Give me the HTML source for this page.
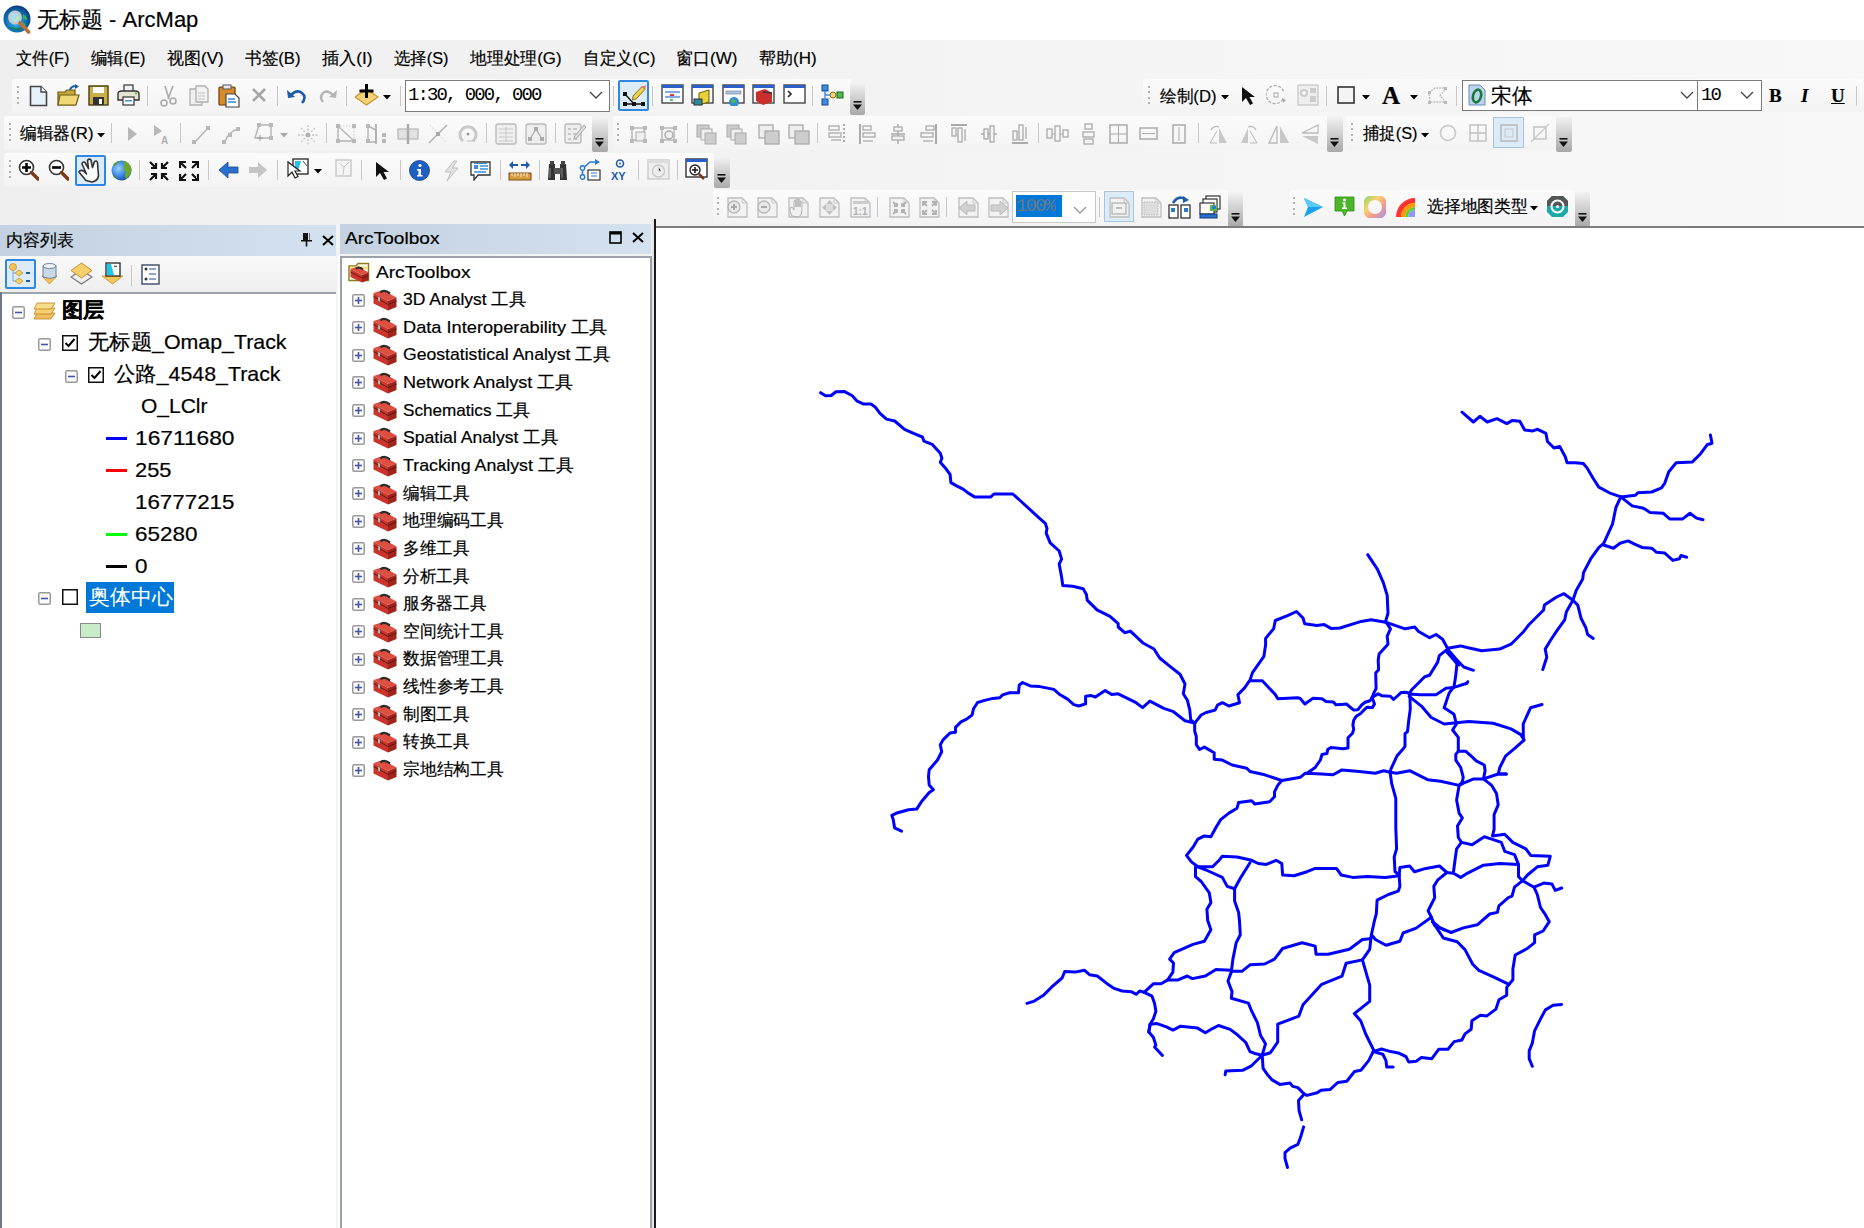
<!DOCTYPE html><html><head><meta charset="utf-8"><style>
html,body{margin:0;padding:0}
body{width:1864px;height:1228px;position:relative;overflow:hidden;background:#f0f0f0;font-family:"Liberation Sans",sans-serif;color:#000}
.a{position:absolute}
.t{white-space:nowrap;line-height:1;-webkit-text-stroke:0.2px currentColor}
</style></head><body>
<div class="a" style="left:0px;top:0px;width:1864px;height:40px;background:#fff"></div>
<div class="a" style="left:0px;top:40px;width:1864px;height:186px;background:linear-gradient(90deg,#efefef,#f2f2f2 40%,#f8f8f8)"></div>
<svg class="a" style="left:2px;top:5px" width="29" height="29" viewBox="0 0 29 29" >
<defs><radialGradient id="gl" cx="45%" cy="60%" r="60%"><stop offset="0" stop-color="#4cc0f0"/><stop offset="0.55" stop-color="#0e78c0"/><stop offset="1" stop-color="#0a3a7a"/></radialGradient></defs>
<ellipse cx="15" cy="14" rx="13.5" ry="13.5" fill="url(#gl)"/>
<path d="M21 9 Q25 11 25 15 L21 14Z M20 17 Q24 18 24 22 L19 21Z" fill="#3ab54a"/>
<path d="M8 22 Q13 26 19 23" stroke="#1a7a3a" stroke-width="2" fill="none" opacity="0.7"/>
<circle cx="13" cy="12.5" r="5.8" fill="#a8dcf2" stroke="#c8c8c8" stroke-width="2.2"/>
<path d="M12 16 Q15 14 17 11" stroke="#b8f0a0" stroke-width="1.5" fill="none"/>
<path d="M18 18 L26.5 27" stroke="#b8703a" stroke-width="3.6" stroke-linecap="round"/>
</svg>
<div class="a t" style="left:37px;top:9px;font-size:22px">无标题 - ArcMap</div>
<div class="a t" style="left:16px;top:50px;transform:scaleX(0.9602);transform-origin:0 0;font-size:17px">文件(F)</div>
<div class="a t" style="left:91px;top:50px;transform:scaleX(0.9617);transform-origin:0 0;font-size:17px">编辑(E)</div>
<div class="a t" style="left:167px;top:50px;font-size:17px">视图(V)</div>
<div class="a t" style="left:245px;top:50px;transform:scaleX(0.9793);transform-origin:0 0;font-size:17px">书签(B)</div>
<div class="a t" style="left:322px;top:50px;transform:scaleX(1.0091);transform-origin:0 0;font-size:17px">插入(I)</div>
<div class="a t" style="left:394px;top:50px;transform:scaleX(0.9617);transform-origin:0 0;font-size:17px">选择(S)</div>
<div class="a t" style="left:470px;top:50px;transform:scaleX(0.9887);transform-origin:0 0;font-size:17px">地理处理(G)</div>
<div class="a t" style="left:583px;top:50px;transform:scaleX(0.9717);transform-origin:0 0;font-size:17px">自定义(C)</div>
<div class="a t" style="left:676px;top:50px;font-size:17px">窗口(W)</div>
<div class="a t" style="left:759px;top:50px;font-size:17px">帮助(H)</div>
<div class="a" style="left:12px;top:79px;width:840px;height:33px;background:linear-gradient(#fbfbfb,#f3f3f3);border-radius:3px"></div>
<div class="a" style="left:17px;top:86.0px;width:2px;height:2px;background:#9a9a9a;border-radius:1px"></div><div class="a" style="left:17px;top:91.3px;width:2px;height:2px;background:#9a9a9a;border-radius:1px"></div><div class="a" style="left:17px;top:96.6px;width:2px;height:2px;background:#9a9a9a;border-radius:1px"></div><div class="a" style="left:17px;top:101.9px;width:2px;height:2px;background:#9a9a9a;border-radius:1px"></div>
<svg class="a" style="left:29px;top:85px" width="20" height="22" viewBox="0 0 20 22" ><path d="M1.5 1.5H12L17.5 7V20.5H1.5Z" fill="#e6f1fb" stroke="#444" stroke-width="1.6"/><path d="M12 1.5V7H17.5" fill="#fff" stroke="#444" stroke-width="1.4"/></svg>
<svg class="a" style="left:57px;top:84px" width="24" height="23" viewBox="0 0 24 23" ><path d="M1 8H8L10 6H18V21H1Z" fill="#c9a93a" stroke="#6b5a10" stroke-width="1.2"/><path d="M3 11H22L19 21H1Z" fill="#f1d877" stroke="#6b5a10" stroke-width="1.2"/><path d="M13 6 Q14 2 19 2" stroke="#1b5ca8" stroke-width="2" fill="none"/><path d="M18 0L22 2.5L18 5Z" fill="#1b5ca8"/></svg>
<svg class="a" style="left:88px;top:85px" width="21" height="21" viewBox="0 0 21 21" ><rect x="1" y="1" width="19" height="19" fill="#c9ae4a" stroke="#4a3d0a" stroke-width="1.4"/><rect x="5" y="2" width="11" height="6" fill="#fff"/><rect x="5" y="12" width="11" height="8" fill="#333"/><rect x="11" y="14" width="3" height="5" fill="#fff"/></svg>
<svg class="a" style="left:117px;top:84px" width="24" height="23" viewBox="0 0 24 23" ><rect x="7" y="1" width="9" height="8" fill="#eef5fc" stroke="#333" stroke-width="1.2"/><path d="M1 10Q1 7 5 7H18Q22 7 22 10V16H1Z" fill="#e8e4d4" stroke="#333" stroke-width="1.4"/><rect x="6" y="13" width="11" height="8" fill="#fff" stroke="#333" stroke-width="1.2"/><rect x="8" y="16" width="7" height="1.5" fill="#4a90d9"/><circle cx="19" cy="9.5" r="1" fill="#3c3"/></svg>
<div class="a" style="left:147px;top:86px;width:1px;height:20px;background:#c8c8c8"></div>
<svg class="a" style="left:157px;top:85px" width="22" height="22" viewBox="0 0 22 22" ><path d="M8 1L12 14M16 1L11 14" stroke="#aaa" stroke-width="1.6" fill="none"/><circle cx="7" cy="18" r="3" fill="none" stroke="#aaa" stroke-width="1.6"/><circle cx="16" cy="16" r="3" fill="none" stroke="#aaa" stroke-width="1.6"/></svg>
<svg class="a" style="left:189px;top:85px" width="21" height="22" viewBox="0 0 21 22" ><path d="M1 4H10L13 7V20H1Z" fill="#f0f0f0" stroke="#b0b0b0" stroke-width="1.3"/><path d="M7 1H16L19 4V17H7Z" fill="#f3f3f3" stroke="#b0b0b0" stroke-width="1.3"/><path d="M9 8H16M9 11H16M9 14H16" stroke="#c0c0c0"/></svg>
<svg class="a" style="left:218px;top:84px" width="22" height="24" viewBox="0 0 22 24" ><rect x="1" y="3" width="16" height="18" rx="1" fill="#d98a2b" stroke="#6a3a0a" stroke-width="1.2"/><rect x="5" y="1" width="8" height="4" fill="#e8e8e8" stroke="#555"/><path d="M8 10H17L21 14V23H8Z" fill="#fff" stroke="#444" stroke-width="1.2"/><path d="M10 15H17M10 18H18" stroke="#3b86d6" stroke-width="1.5"/></svg>
<svg class="a" style="left:251px;top:87px" width="16" height="16" viewBox="0 0 16 16" ><path d="M2 2L14 14M14 2L2 14" stroke="#a5a5a5" stroke-width="2.6"/></svg>
<div class="a" style="left:277px;top:86px;width:1px;height:20px;background:#c8c8c8"></div>
<svg class="a" style="left:287px;top:86px" width="20" height="19" viewBox="0 0 20 19" ><path d="M4 9 Q10 3 15 7 Q20 11 15 17" stroke="#1e5aa8" stroke-width="2.6" fill="none"/><path d="M0 4L8 11L1 12Z" fill="#1e5aa8"/></svg>
<svg class="a" style="left:319px;top:86px" width="19" height="18" viewBox="0 0 19 18" ><path d="M14 9 Q8 3 4 7 Q0 11 4 16" stroke="#b5b5b5" stroke-width="2.4" fill="none"/><path d="M18 4L10 11L17 12Z" fill="#b5b5b5"/></svg>
<div class="a" style="left:346px;top:86px;width:1px;height:20px;background:#c8c8c8"></div>
<svg class="a" style="left:355px;top:83px" width="24" height="24" viewBox="0 0 24 24" ><path d="M11.5 6L23 14L11.5 22L0 14Z" fill="#f4d27a" stroke="#c89530" stroke-width="1.2"/><path d="M11.5 1V15M4.5 8H18.5" stroke="#000" stroke-width="3"/></svg>
<svg class="a" style="left:383px;top:95px" width="8" height="5" viewBox="0 0 8 5" ><path d="M0 0H8L4 4.5Z" fill="#000"/></svg>
<div class="a" style="left:400px;top:86px;width:1px;height:20px;background:#c8c8c8"></div>
<div class="a" style="left:405px;top:80px;width:205px;height:32px;background:#fff;border:1.5px solid #7a7a7a;box-sizing:border-box"></div>
<div class="a t" style="left:408px;top:86px;transform:scaleX(0.996);transform-origin:0 0;font-family:'Liberation Mono',monospace;font-size:19px;letter-spacing:-1.9px;-webkit-text-stroke:0">1:30, 000, 000</div>
<svg class="a" style="left:589px;top:91px" width="14" height="9" viewBox="0 0 14 9" ><path d="M1 1L7 7L13 1" stroke="#444" stroke-width="1.3" fill="none"/></svg>
<div class="a" style="left:613px;top:86px;width:1px;height:20px;background:#c8c8c8"></div>
<div class="a" style="left:618px;top:80px;width:31px;height:31px;background:#dcebf8;border:2px solid #2f88e0;border-radius:2px;box-sizing:border-box"></div>
<svg class="a" style="left:622px;top:84px" width="24" height="24" viewBox="0 0 24 24" ><path d="M3 10L12 20M3 20H21" stroke="#111" stroke-width="1.3" fill="none"/><rect x="1" y="8" width="4" height="4" fill="#111"/><rect x="1" y="18" width="4" height="4" fill="#111"/><rect x="10" y="18" width="4" height="4" fill="#111"/><rect x="19" y="18" width="4" height="4" fill="#111"/><path d="M11 12L20 2.5L23 5.5L14 15L10.5 16Z" fill="#f2cf4a" stroke="#6a5a10" stroke-width="0.8"/><path d="M20 2.5L23 5.5L24 1.5Z" fill="#e66"/></svg>
<div class="a" style="left:652px;top:86px;width:1px;height:20px;background:#c8c8c8"></div>
<svg class="a" style="left:661px;top:84px" width="23" height="22" viewBox="0 0 23 22" ><rect x="1" y="1" width="21" height="18" fill="#fff" stroke="#444" stroke-width="1.4"/><rect x="1" y="1" width="21" height="3" fill="#2b5fc7"/><path d="M4 8H19M4 13H19" stroke="#5b8fdb" stroke-width="1.6"/><rect x="9" y="10" width="4" height="2" fill="#e33"/><rect x="9" y="15" width="3" height="2" fill="#5c5"/></svg>
<svg class="a" style="left:691px;top:84px" width="23" height="22" viewBox="0 0 23 22" ><rect x="1" y="1" width="21" height="18" fill="#fff" stroke="#444" stroke-width="1.4"/><rect x="1" y="1" width="21" height="3" fill="#2b5fc7"/><path d="M8 9L18 6V18L8 21Z" fill="#e8d23a" stroke="#6a5a00"/><rect x="3" y="15" width="8" height="6" fill="#2a8a9a" stroke="#333"/></svg>
<svg class="a" style="left:722px;top:84px" width="23" height="22" viewBox="0 0 23 22" ><rect x="1" y="1" width="21" height="18" fill="#fff" stroke="#444" stroke-width="1.4"/><rect x="1" y="1" width="21" height="3" fill="#2b5fc7"/><rect x="4" y="7" width="15" height="3" fill="#a9c7e8" stroke="#777" stroke-width="0.6"/><circle cx="12" cy="18" r="5" fill="#2f8fd0"/><path d="M9 16Q12 14 14 17Q12 20 10 19Z" fill="#5cb84a"/></svg>
<svg class="a" style="left:752px;top:84px" width="23" height="22" viewBox="0 0 23 22" ><rect x="1" y="1" width="21" height="18" fill="#fff" stroke="#444" stroke-width="1.4"/><rect x="1" y="1" width="21" height="3" fill="#2b5fc7"/><path d="M4 8L13 5L20 9V18L11 21L4 17Z" fill="#c9302a"/><path d="M11 8L20 9" stroke="#333" stroke-width="1.4"/></svg>
<svg class="a" style="left:783px;top:84px" width="23" height="22" viewBox="0 0 23 22" ><rect x="1" y="1" width="21" height="18" fill="#fff" stroke="#444" stroke-width="1.4"/><rect x="1" y="1" width="21" height="3" fill="#2b5fc7"/><path d="M5 7L8 10L5 13" stroke="#222" stroke-width="1.6" fill="none"/></svg>
<div class="a" style="left:812px;top:86px;width:1px;height:20px;background:#c8c8c8"></div>
<svg class="a" style="left:821px;top:84px" width="23" height="22" viewBox="0 0 23 22" ><rect x="1" y="1" width="6" height="6" fill="#3b8de0" stroke="#1a4a8a"/><rect x="1" y="15" width="6" height="6" fill="#3b8de0" stroke="#1a4a8a"/><rect x="16" y="8" width="6" height="6" fill="#55b84a" stroke="#1a6a1a"/><circle cx="12" cy="11" r="3" fill="#f3d27a" stroke="#8a6a1a"/><path d="M4 7V18M4 11H9M15 11H16" stroke="#3b8de0" stroke-width="1.4"/></svg>
<div class="a" style="left:850px;top:83px;width:15px;height:32px;background:linear-gradient(#f2f2f2,#a8a8a8);border-radius:0 0 2px 2px"></div><svg class="a" style="left:853px;top:101px" width="9" height="10" viewBox="0 0 9 10" ><rect x="0.5" y="0" width="8" height="1.6" fill="#111"/><path d="M0 3.5H9L4.5 9Z" fill="#111"/></svg>
<div class="a" style="left:1143px;top:79px;width:721px;height:33px;background:linear-gradient(#fbfbfb,#f3f3f3);border-radius:3px"></div>
<div class="a" style="left:1148px;top:86.0px;width:2px;height:2px;background:#9a9a9a;border-radius:1px"></div><div class="a" style="left:1148px;top:91.3px;width:2px;height:2px;background:#9a9a9a;border-radius:1px"></div><div class="a" style="left:1148px;top:96.6px;width:2px;height:2px;background:#9a9a9a;border-radius:1px"></div><div class="a" style="left:1148px;top:101.9px;width:2px;height:2px;background:#9a9a9a;border-radius:1px"></div>
<div class="a t" style="left:1160px;top:88px;transform:scaleX(0.9807);transform-origin:0 0;font-size:17px">绘制(D)</div>
<svg class="a" style="left:1221px;top:95px" width="8" height="5" viewBox="0 0 8 5" ><path d="M0 0H8L4 4.5Z" fill="#000"/></svg>
<svg class="a" style="left:1241px;top:86px" width="16" height="20" viewBox="0 0 16 20" ><path d="M1 1L1 16L5 12L9 19L12 17.5L8.5 11H14Z" fill="#111"/></svg>
<svg class="a" style="left:1266px;top:85px" width="22" height="22" viewBox="0 0 22 22" ><path d="M17 14A9 9 0 1 1 18 8" stroke="#b0b0b0" stroke-width="1.4" fill="none" stroke-dasharray="3 1.5"/><rect x="8" y="8" width="4" height="4" fill="none" stroke="#aaa"/><path d="M16 13L20 15L17 18Z" fill="#aaa"/></svg>
<svg class="a" style="left:1297px;top:84px" width="23" height="23" viewBox="0 0 23 23" ><rect x="1" y="1" width="20" height="20" fill="#eee" stroke="#bbb"/><circle cx="7" cy="9" r="4" fill="#ccc"/><path d="M5 9H9M7 7V11" stroke="#fff" stroke-width="1.5"/><rect x="13" y="4" width="6" height="5" fill="#ccc"/><rect x="13" y="12" width="6" height="6" fill="#ccc"/></svg>
<div class="a" style="left:1326px;top:86px;width:1px;height:20px;background:#c8c8c8"></div>
<svg class="a" style="left:1337px;top:86px" width="18" height="18" viewBox="0 0 18 18" ><rect x="1" y="1" width="16" height="16" fill="#f4f4f4" stroke="#333" stroke-width="1.6"/></svg>
<svg class="a" style="left:1362px;top:95px" width="8" height="5" viewBox="0 0 8 5" ><path d="M0 0H8L4 4.5Z" fill="#000"/></svg>
<div class="a t" style="left:1382px;top:83px;font-family:'Liberation Serif',serif;font-weight:bold;font-size:25px">A</div>
<svg class="a" style="left:1410px;top:95px" width="8" height="5" viewBox="0 0 8 5" ><path d="M0 0H8L4 4.5Z" fill="#000"/></svg>
<svg class="a" style="left:1427px;top:85px" width="22" height="22" viewBox="0 0 22 22" ><path d="M3 17L2 8L8 3H19L13 11L19 17Z" fill="none" stroke="#c0c0c0" stroke-width="1.3" stroke-dasharray="2 1"/><rect x="1" y="6" width="3" height="3" fill="#bbb"/><rect x="17" y="2" width="3" height="3" fill="#bbb"/><rect x="17" y="16" width="3" height="3" fill="#bbb"/><rect x="1" y="16" width="3" height="3" fill="#bbb"/></svg>
<div class="a" style="left:1456px;top:86px;width:1px;height:20px;background:#c8c8c8"></div>
<div class="a" style="left:1462px;top:80px;width:237px;height:31px;background:#fff;border:1.5px solid #7a7a7a;box-sizing:border-box"></div>
<svg class="a" style="left:1468px;top:84px" width="18" height="22" viewBox="0 0 18 22" ><path d="M1 1H12L17 6V21H1Z" fill="#bcd4ef" stroke="#6a8ab0"/><ellipse cx="9" cy="12" rx="4" ry="6.5" fill="none" stroke="#1a7a3a" stroke-width="2.6" transform="rotate(15 9 12)"/></svg>
<div class="a t" style="left:1491px;top:85px;transform:scaleX(0.9881);transform-origin:0 0;font-size:21px">宋体</div>
<svg class="a" style="left:1680px;top:91px" width="14" height="9" viewBox="0 0 14 9" ><path d="M1 1L7 7L13 1" stroke="#444" stroke-width="1.3" fill="none"/></svg>
<div class="a" style="left:1697px;top:80px;width:65px;height:31px;background:#fff;border:1.5px solid #7a7a7a;box-sizing:border-box"></div>
<div class="a t" style="left:1701px;top:86px;font-family:'Liberation Mono',monospace;font-size:19px;letter-spacing:-1.9px;-webkit-text-stroke:0">10</div>
<svg class="a" style="left:1740px;top:91px" width="14" height="9" viewBox="0 0 14 9" ><path d="M1 1L7 7L13 1" stroke="#444" stroke-width="1.3" fill="none"/></svg>
<div class="a t" style="left:1769px;top:86px;font-family:'Liberation Serif',serif;font-weight:bold;font-size:19px">B</div>
<div class="a t" style="left:1801px;top:86px;font-family:'Liberation Serif',serif;font-weight:bold;font-style:italic;font-size:19px">I</div>
<div class="a t" style="left:1831px;top:86px;font-family:'Liberation Serif',serif;font-weight:bold;font-size:19px;text-decoration:underline">U</div>
<div class="a" style="left:1856px;top:86px;width:1px;height:20px;background:#c8c8c8"></div>
<div class="a" style="left:4px;top:116px;width:590px;height:34px;background:linear-gradient(#fbfbfb,#f3f3f3);border-radius:3px"></div>
<div class="a" style="left:9px;top:123.0px;width:2px;height:2px;background:#9a9a9a;border-radius:1px"></div><div class="a" style="left:9px;top:128.3px;width:2px;height:2px;background:#9a9a9a;border-radius:1px"></div><div class="a" style="left:9px;top:133.6px;width:2px;height:2px;background:#9a9a9a;border-radius:1px"></div><div class="a" style="left:9px;top:138.9px;width:2px;height:2px;background:#9a9a9a;border-radius:1px"></div>
<div class="a t" style="left:20px;top:125px;transform:scaleX(0.9851);transform-origin:0 0;font-size:17px">编辑器(R)</div>
<svg class="a" style="left:97px;top:133px" width="8" height="5" viewBox="0 0 8 5" ><path d="M0 0H8L4 4.5Z" fill="#000"/></svg>
<div class="a" style="left:111px;top:123px;width:1px;height:20px;background:#c8c8c8"></div>
<svg class="a" style="left:127px;top:126px" width="11" height="16" viewBox="0 0 11 16" ><path d="M1 1L10 8L1 15Z" fill="#b8b8b8"/></svg>
<svg class="a" style="left:153px;top:124px" width="16" height="21" viewBox="0 0 16 21" ><path d="M1 1L9 7L1 12Z" fill="#b8b8b8"/><text x="8" y="20" font-size="10" font-family="Liberation Sans" fill="#b0b0b0" font-weight="bold">A</text></svg>
<div class="a" style="left:180px;top:123px;width:1px;height:20px;background:#c8c8c8"></div>
<svg class="a" style="left:192px;top:125px" width="19" height="20" viewBox="0 0 19 20" ><path d="M3 17L16 3" stroke="#b4b4b4" fill="none" stroke-width="1.4"/><rect x="0" y="15" width="4" height="4" fill="#b8b8b8"/><rect x="14" y="1" width="4" height="4" fill="#b8b8b8"/></svg>
<svg class="a" style="left:222px;top:125px" width="19" height="20" viewBox="0 0 19 20" ><path d="M3 17Q6 7 16 4" stroke="#b4b4b4" fill="none" stroke-width="1.4"/><rect x="0" y="15" width="4" height="4" fill="#b8b8b8"/><rect x="6" y="8" width="4" height="4" fill="#b8b8b8"/><rect x="14" y="2" width="4" height="4" fill="#b8b8b8"/></svg>
<svg class="a" style="left:252px;top:122px" width="22" height="22" viewBox="0 0 22 22" ><path d="M7 3H19V16H3Z" stroke="#b4b4b4" fill="none" stroke-width="1.4"/><rect x="5" y="1" width="4" height="4" fill="#b8b8b8"/><rect x="17" y="1" width="4" height="4" fill="#b8b8b8"/><rect x="17" y="14" width="4" height="4" fill="#b8b8b8"/><path d="M8 13V19M5 16H11" stroke="#999"/></svg>
<svg class="a" style="left:280px;top:133px" width="8" height="5" viewBox="0 0 8 5" ><path d="M0 0H8L4 4.5Z" fill="#aaa"/></svg>
<svg class="a" style="left:297px;top:124px" width="22" height="22" viewBox="0 0 22 22" ><path d="M11 1V21M1 11H21M4 4L8 8M18 4L14 8M4 18L8 14M18 18L14 14" stroke="#c4c4c4" stroke-width="1.3" stroke-dasharray="2 1.5"/><rect x="9" y="9" width="4" height="4" fill="#b0b0b0"/></svg>
<div class="a" style="left:326px;top:123px;width:1px;height:20px;background:#c8c8c8"></div>
<svg class="a" style="left:335px;top:123px" width="22" height="22" viewBox="0 0 22 22" ><path d="M3 3L19 18H3Z" stroke="#b4b4b4" fill="none" stroke-width="1.4"/><rect x="1" y="1" width="4" height="4" fill="#b8b8b8"/><rect x="17" y="16" width="4" height="4" fill="#b8b8b8"/><rect x="1" y="16" width="4" height="4" fill="#b8b8b8"/><rect x="17" y="1" width="4" height="4" fill="#b8b8b8"/><path d="M5 3H17M19 5V16" stroke="#c8c8c8" stroke-dasharray="1.5 1.5"/></svg>
<svg class="a" style="left:365px;top:123px" width="22" height="22" viewBox="0 0 22 22" ><path d="M3 3L11 7V19H3Z" stroke="#b4b4b4" fill="none" stroke-width="1.4"/><path d="M11 1V21" stroke="#aaa" stroke-width="1.5"/><rect x="1" y="1" width="4" height="4" fill="#b8b8b8"/><rect x="1" y="16" width="4" height="4" fill="#b8b8b8"/><rect x="17" y="10" width="4" height="4" fill="#b8b8b8"/><rect x="17" y="16" width="4" height="4" fill="#b8b8b8"/></svg>
<svg class="a" style="left:397px;top:123px" width="22" height="22" viewBox="0 0 22 22" ><rect x="1" y="6" width="20" height="10" fill="#e2e2e2" stroke="#bbb" stroke-width="1.3"/><path d="M11 1V21" stroke="#aaa" stroke-width="2.5"/></svg>
<svg class="a" style="left:428px;top:123px" width="22" height="22" viewBox="0 0 22 22" ><path d="M1 20L19 2" stroke="#b0b0b0" stroke-width="1.4"/><path d="M2 2L18 19" stroke="#c8c8c8" stroke-dasharray="1.5 2"/><rect x="8" y="9" width="4" height="4" fill="#aaa"/></svg>
<svg class="a" style="left:458px;top:123px" width="22" height="22" viewBox="0 0 22 22" ><path d="M5 18A8 8 0 1 1 15 18" stroke="#c8c8c8" stroke-width="3" fill="none"/><circle cx="10" cy="11" r="1.5" fill="#999"/><path d="M9 18H17" stroke="#bbb"/></svg>
<div class="a" style="left:486px;top:123px;width:1px;height:20px;background:#c8c8c8"></div>
<svg class="a" style="left:495px;top:123px" width="22" height="22" viewBox="0 0 22 22" ><rect x="1" y="1" width="20" height="20" rx="2" fill="#eee" stroke="#bbb" stroke-width="1.4"/><path d="M4 6H18M4 10H18M4 14H18M4 18H18M11 4V19" stroke="#c8c8c8"/></svg>
<svg class="a" style="left:525px;top:123px" width="22" height="22" viewBox="0 0 22 22" ><rect x="1" y="1" width="20" height="20" rx="2" fill="#eee" stroke="#bbb" stroke-width="1.4"/><path d="M5 16L11 6L17 16" stroke="#b0b0b0" stroke-width="1.4" fill="none"/><rect x="9" y="4" width="4" height="4" fill="#aaa"/><rect x="3" y="14" width="4" height="4" fill="#aaa"/><rect x="15" y="14" width="4" height="4" fill="#aaa"/></svg>
<div class="a" style="left:555px;top:123px;width:1px;height:20px;background:#c8c8c8"></div>
<svg class="a" style="left:564px;top:122px" width="23" height="23" viewBox="0 0 23 23" ><rect x="1" y="2" width="16" height="19" rx="2" fill="#eee" stroke="#bbb" stroke-width="1.4"/><path d="M4 7H7M4 12H7M4 17H7M9 7H13M9 12H13M9 17H13" stroke="#bbb" stroke-width="1.4"/><path d="M10 15L20 3L22 5L12 17Z" fill="#ddd" stroke="#aaa"/></svg>
<div class="a" style="left:592px;top:117px;width:16px;height:35px;background:linear-gradient(#f2f2f2,#a8a8a8);border-radius:0 0 2px 2px"></div><svg class="a" style="left:595px;top:138px" width="9" height="10" viewBox="0 0 9 10" ><rect x="0.5" y="0" width="8" height="1.6" fill="#111"/><path d="M0 3.5H9L4.5 9Z" fill="#111"/></svg>
<div class="a" style="left:613px;top:116px;width:715px;height:34px;background:linear-gradient(#fbfbfb,#f3f3f3);border-radius:3px"></div>
<div class="a" style="left:617px;top:123.0px;width:2px;height:2px;background:#9a9a9a;border-radius:1px"></div><div class="a" style="left:617px;top:128.3px;width:2px;height:2px;background:#9a9a9a;border-radius:1px"></div><div class="a" style="left:617px;top:133.6px;width:2px;height:2px;background:#9a9a9a;border-radius:1px"></div><div class="a" style="left:617px;top:138.9px;width:2px;height:2px;background:#9a9a9a;border-radius:1px"></div>
<svg class="a" style="left:629px;top:125px" width="20" height="20" viewBox="0 0 20 20" ><rect x="3" y="3" width="12" height="12" stroke="#b4b4b4" fill="none" stroke-width="1.4"/><rect x="7" y="7" width="9" height="9" fill="#eee" stroke="#aaa"/><rect x="1" y="1" width="4" height="4" fill="#b8b8b8"/><rect x="14" y="1" width="4" height="4" fill="#b8b8b8"/><rect x="1" y="14" width="4" height="4" fill="#b8b8b8"/><rect x="14" y="14" width="4" height="4" fill="#b8b8b8"/></svg>
<svg class="a" style="left:659px;top:125px" width="20" height="20" viewBox="0 0 20 20" ><rect x="3" y="3" width="12" height="12" stroke="#b4b4b4" fill="none" stroke-width="1.4"/><circle cx="10" cy="10" r="4" fill="#eee" stroke="#aaa" stroke-width="1.4"/><rect x="1" y="1" width="4" height="4" fill="#b8b8b8"/><rect x="14" y="1" width="4" height="4" fill="#b8b8b8"/><rect x="1" y="14" width="4" height="4" fill="#b8b8b8"/><rect x="14" y="14" width="4" height="4" fill="#b8b8b8"/></svg>
<div class="a" style="left:687px;top:123px;width:1px;height:20px;background:#c8c8c8"></div>
<svg class="a" style="left:696px;top:124px" width="22" height="22" viewBox="0 0 22 22" ><rect x="1" y="1" width="12" height="12" fill="#ccc" stroke="#aaa"/><rect x="5" y="5" width="11" height="11" fill="#eee" stroke="#aaa"/><rect x="9" y="9" width="11" height="11" fill="#ccc" stroke="#aaa"/></svg>
<svg class="a" style="left:726px;top:124px" width="22" height="22" viewBox="0 0 22 22" ><rect x="1" y="1" width="12" height="12" fill="#ccc" stroke="#aaa"/><rect x="5" y="5" width="11" height="11" fill="#eee" stroke="#aaa"/><rect x="9" y="9" width="11" height="11" fill="#ccc" stroke="#aaa"/></svg>
<svg class="a" style="left:758px;top:124px" width="22" height="22" viewBox="0 0 22 22" ><rect x="1" y="1" width="14" height="13" fill="#eee" stroke="#aaa" stroke-width="1.3"/><rect x="7" y="7" width="14" height="13" fill="#ccc" stroke="#aaa" stroke-width="1.3"/></svg>
<svg class="a" style="left:788px;top:124px" width="22" height="22" viewBox="0 0 22 22" ><rect x="1" y="1" width="14" height="13" fill="#eee" stroke="#aaa" stroke-width="1.3"/><rect x="7" y="7" width="14" height="13" fill="#ccc" stroke="#aaa" stroke-width="1.3"/></svg>
<div class="a" style="left:817px;top:123px;width:1px;height:20px;background:#c8c8c8"></div>
<svg class="a" style="left:828px;top:123px" width="19" height="22" viewBox="0 0 19 22" ><rect x="1" y="3" width="10" height="4" fill="none" stroke="#aaa" stroke-width="1.3"/><rect x="1" y="10" width="12" height="4" fill="none" stroke="#aaa" stroke-width="1.3"/><path d="M16 1V21" stroke="#aaa" stroke-width="2" stroke-dasharray="2 2"/><path d="M3 17H13" stroke="#aaa" stroke-width="1.3"/></svg>
<svg class="a" style="left:858px;top:123px" width="19" height="22" viewBox="0 0 19 22" ><path d="M2 1V21" stroke="#aaa" stroke-width="2"/><rect x="5" y="3" width="8" height="4" fill="none" stroke="#aaa" stroke-width="1.3"/><rect x="5" y="10" width="12" height="4" fill="none" stroke="#aaa" stroke-width="1.3"/><path d="M5 18H15" stroke="#aaa" stroke-width="1.3"/></svg>
<svg class="a" style="left:890px;top:123px" width="19" height="22" viewBox="0 0 19 22" ><path d="M8 1V21M1 11H15" stroke="#aaa" stroke-width="1.5"/><rect x="4" y="4" width="8" height="4" fill="#f3f3f3" stroke="#aaa" stroke-width="1.3"/><rect x="2" y="13" width="12" height="4" fill="#f3f3f3" stroke="#aaa" stroke-width="1.3"/></svg>
<svg class="a" style="left:920px;top:123px" width="19" height="22" viewBox="0 0 19 22" ><path d="M16 1V21" stroke="#aaa" stroke-width="2"/><rect x="6" y="3" width="8" height="4" fill="none" stroke="#aaa" stroke-width="1.3"/><rect x="1" y="10" width="12" height="4" fill="none" stroke="#aaa" stroke-width="1.3"/><path d="M3 18H13" stroke="#aaa" stroke-width="1.3"/></svg>
<svg class="a" style="left:950px;top:123px" width="19" height="22" viewBox="0 0 19 22" ><path d="M1 2H17" stroke="#aaa" stroke-width="2"/><rect x="2" y="5" width="4" height="8" fill="none" stroke="#aaa" stroke-width="1.3"/><rect x="8" y="5" width="4" height="14" fill="none" stroke="#aaa" stroke-width="1.3"/><path d="M15 6V18" stroke="#aaa" stroke-width="1.3"/></svg>
<svg class="a" style="left:980px;top:123px" width="19" height="22" viewBox="0 0 19 22" ><path d="M1 11H17" stroke="#aaa" stroke-width="1.5"/><rect x="4" y="6" width="4" height="10" fill="#f3f3f3" stroke="#aaa" stroke-width="1.3"/><rect x="10" y="3" width="4" height="16" fill="#f3f3f3" stroke="#aaa" stroke-width="1.3"/></svg>
<svg class="a" style="left:1011px;top:123px" width="19" height="22" viewBox="0 0 19 22" ><path d="M1 20H17" stroke="#aaa" stroke-width="2"/><rect x="2" y="8" width="4" height="9" fill="none" stroke="#aaa" stroke-width="1.3"/><rect x="8" y="2" width="4" height="15" fill="none" stroke="#aaa" stroke-width="1.3"/><path d="M15 4V16" stroke="#aaa" stroke-width="1.3"/></svg>
<div class="a" style="left:1038px;top:123px;width:1px;height:20px;background:#c8c8c8"></div>
<svg class="a" style="left:1046px;top:123px" width="24" height="22" viewBox="0 0 24 22" ><rect x="1" y="6" width="5" height="9" fill="none" stroke="#aaa" stroke-width="1.3"/><rect x="9" y="3" width="5" height="15" fill="none" stroke="#aaa" stroke-width="1.3"/><rect x="17" y="7" width="5" height="7" fill="none" stroke="#aaa" stroke-width="1.3"/><path d="M6 11H9M14 11H17" stroke="#aaa"/></svg>
<svg class="a" style="left:1082px;top:123px" width="14" height="22" viewBox="0 0 14 22" ><rect x="3" y="1" width="7" height="5" fill="none" stroke="#aaa" stroke-width="1.3"/><rect x="1" y="9" width="11" height="5" fill="none" stroke="#aaa" stroke-width="1.3"/><rect x="2" y="16" width="9" height="5" fill="none" stroke="#aaa" stroke-width="1.3"/></svg>
<svg class="a" style="left:1109px;top:123px" width="19" height="22" viewBox="0 0 19 22" ><rect x="1" y="2" width="17" height="18" fill="none" stroke="#aaa" stroke-width="1.5"/><path d="M9.5 2V20M1 11H18" stroke="#aaa" stroke-width="1"/></svg>
<svg class="a" style="left:1139px;top:123px" width="19" height="22" viewBox="0 0 19 22" ><rect x="1" y="5" width="17" height="11" fill="none" stroke="#aaa" stroke-width="1.5"/><path d="M3 10.5H16" stroke="#aaa"/></svg>
<svg class="a" style="left:1172px;top:123px" width="14" height="22" viewBox="0 0 14 22" ><rect x="1" y="2" width="12" height="18" fill="none" stroke="#aaa" stroke-width="1.5"/><path d="M7 4V18" stroke="#aaa"/></svg>
<div class="a" style="left:1198px;top:123px;width:1px;height:20px;background:#c8c8c8"></div>
<svg class="a" style="left:1208px;top:124px" width="22" height="22" viewBox="0 0 22 22" ><path d="M11 4L19 19H11Z" fill="#c8c8c8"/><path d="M9 7L2 19H9" fill="none" stroke="#bbb"/><path d="M3 6Q6 1 11 3" stroke="#bbb" fill="none" stroke-width="1.3"/></svg>
<svg class="a" style="left:1239px;top:124px" width="22" height="22" viewBox="0 0 22 22" ><path d="M9 4L2 19H9Z" fill="#c8c8c8"/><path d="M11 7L18 19H11" fill="none" stroke="#bbb"/><path d="M17 6Q14 1 9 3" stroke="#bbb" fill="none" stroke-width="1.3"/></svg>
<svg class="a" style="left:1268px;top:124px" width="22" height="22" viewBox="0 0 22 22" ><path d="M9 2L1 19H9Z" fill="none" stroke="#bbb" stroke-width="1.3"/><path d="M12 2L21 19H12Z" fill="#c8c8c8"/></svg>
<svg class="a" style="left:1301px;top:124px" width="22" height="22" viewBox="0 0 22 22" ><path d="M17 1L1 9H17Z" fill="none" stroke="#bbb" stroke-width="1.3"/><path d="M17 12L1 12L17 20Z" fill="#c8c8c8"/></svg>
<div class="a" style="left:1327px;top:117px;width:16px;height:35px;background:linear-gradient(#f2f2f2,#a8a8a8);border-radius:0 0 2px 2px"></div><svg class="a" style="left:1330px;top:138px" width="9" height="10" viewBox="0 0 9 10" ><rect x="0.5" y="0" width="8" height="1.6" fill="#111"/><path d="M0 3.5H9L4.5 9Z" fill="#111"/></svg>
<div class="a" style="left:1347px;top:116px;width:210px;height:34px;background:linear-gradient(#fbfbfb,#f3f3f3);border-radius:3px"></div>
<div class="a" style="left:1351px;top:123.0px;width:2px;height:2px;background:#9a9a9a;border-radius:1px"></div><div class="a" style="left:1351px;top:128.3px;width:2px;height:2px;background:#9a9a9a;border-radius:1px"></div><div class="a" style="left:1351px;top:133.6px;width:2px;height:2px;background:#9a9a9a;border-radius:1px"></div><div class="a" style="left:1351px;top:138.9px;width:2px;height:2px;background:#9a9a9a;border-radius:1px"></div>
<div class="a t" style="left:1363px;top:125px;transform:scaleX(0.9617);transform-origin:0 0;font-size:17px">捕捉(S)</div>
<svg class="a" style="left:1421px;top:133px" width="8" height="5" viewBox="0 0 8 5" ><path d="M0 0H8L4 4.5Z" fill="#000"/></svg>
<svg class="a" style="left:1439px;top:124px" width="18" height="18" viewBox="0 0 18 18" ><circle cx="9" cy="9" r="7.5" fill="none" stroke="#c8c8c8" stroke-width="1.6"/></svg>
<svg class="a" style="left:1469px;top:124px" width="18" height="18" viewBox="0 0 18 18" ><rect x="1" y="1" width="16" height="16" fill="none" stroke="#c0c0c0" stroke-width="1.4"/><path d="M9 1V17M1 9H17" stroke="#c0c0c0" stroke-width="1.4"/></svg>
<div class="a" style="left:1493px;top:117px;width:31px;height:31px;background:#dcebf8;border:1.5px solid #a9c4dc;box-sizing:border-box"></div>
<svg class="a" style="left:1500px;top:124px" width="18" height="18" viewBox="0 0 18 18" ><rect x="1" y="1" width="16" height="16" fill="none" stroke="#b8b8b8" stroke-width="1.5"/><rect x="5" y="5" width="8" height="8" fill="none" stroke="#c8c8c8"/></svg>
<svg class="a" style="left:1530px;top:123px" width="20" height="20" viewBox="0 0 20 20" ><rect x="4" y="4" width="12" height="12" fill="none" stroke="#c0c0c0" stroke-width="1.4"/><path d="M1 19L19 1" stroke="#c8c8c8" stroke-width="1.3"/></svg>
<div class="a" style="left:1556px;top:117px;width:16px;height:35px;background:linear-gradient(#f2f2f2,#a8a8a8);border-radius:0 0 2px 2px"></div><svg class="a" style="left:1559px;top:138px" width="9" height="10" viewBox="0 0 9 10" ><rect x="0.5" y="0" width="8" height="1.6" fill="#111"/><path d="M0 3.5H9L4.5 9Z" fill="#111"/></svg>
<div class="a" style="left:4px;top:153px;width:710px;height:34px;background:linear-gradient(#fbfbfb,#f3f3f3);border-radius:3px"></div>
<div class="a" style="left:9px;top:160.0px;width:2px;height:2px;background:#9a9a9a;border-radius:1px"></div><div class="a" style="left:9px;top:165.3px;width:2px;height:2px;background:#9a9a9a;border-radius:1px"></div><div class="a" style="left:9px;top:170.6px;width:2px;height:2px;background:#9a9a9a;border-radius:1px"></div><div class="a" style="left:9px;top:175.9px;width:2px;height:2px;background:#9a9a9a;border-radius:1px"></div>
<svg class="a" style="left:18px;top:159px" width="21" height="22" viewBox="0 0 21 22" ><circle cx="8.5" cy="8.5" r="7" fill="#fff" stroke="#333" stroke-width="1.6"/><path d="M8.5 4V13M4 8.5H13" stroke="#000" stroke-width="2.6"/><path d="M13.5 13.5L20 20" stroke="#7a3a1a" stroke-width="3.4" stroke-linecap="round"/></svg>
<svg class="a" style="left:48px;top:159px" width="21" height="22" viewBox="0 0 21 22" ><circle cx="8.5" cy="8.5" r="7" fill="#fff" stroke="#333" stroke-width="1.6"/><path d="M4 8.5H13" stroke="#000" stroke-width="2.6"/><path d="M13.5 13.5L20 20" stroke="#7a3a1a" stroke-width="3.4" stroke-linecap="round"/></svg>
<div class="a" style="left:75px;top:155px;width:31px;height:31px;background:#dcebf8;border:2px solid #2f88e0;border-radius:2px;box-sizing:border-box"></div>
<svg class="a" style="left:76px;top:156px" width="26" height="28" viewBox="0 0 26 28" ><path d="M3 16 Q5 13 8 15.5 L10.5 18 L6 8 Q6.5 5 9 6.5 L12.5 12.5 L11.5 4.5 Q13 2 15 4 L16.5 11.5 L18.5 5.5 Q20.5 4 21.5 6.5 L22.5 20 Q21.5 25 16 26 L10 24.5 Z" fill="#fdfdfd" stroke="#333" stroke-width="1.6" stroke-linejoin="round"/></svg>
<svg class="a" style="left:111px;top:160px" width="21" height="21" viewBox="0 0 21 21" ><defs><radialGradient id="gb" cx="35%" cy="40%" r="70%"><stop offset="0" stop-color="#9ad0ff"/><stop offset="0.6" stop-color="#2f7fe0"/><stop offset="1" stop-color="#1a3f8a"/></radialGradient></defs><circle cx="10.5" cy="10.5" r="10" fill="url(#gb)"/><path d="M12 1 Q19 2 20.5 9 Q20 16 15 19 Q13 15 15 12 Q12 10 12.5 7 Q14 5 12 1Z" fill="#6aa82a"/><path d="M2 5 Q5 1 9 1 Q6 3 4 6Z" fill="#5a9a2a"/><path d="M2 14 Q4 17 7 19 Q4 19 2 16Z" fill="#4a8a20"/></svg>
<div class="a" style="left:139px;top:160px;width:1px;height:20px;background:#c8c8c8"></div>
<svg class="a" style="left:149px;top:161px" width="20" height="20" viewBox="0 0 20 20" ><path d="M1 1L7 7M7 2V7H2M19 1L13 7M13 2V7H18M1 19L7 13M2 13H7V18M19 19L13 13M18 13H13V18" stroke="#111" stroke-width="2.2" fill="none"/></svg>
<svg class="a" style="left:179px;top:161px" width="20" height="20" viewBox="0 0 20 20" ><path d="M7 1H1V7M1 1L7 7M13 1H19V7M19 1L13 7M1 13V19H7M1 19L7 13M19 13V19H13M19 19L13 13" stroke="#111" stroke-width="2.2" fill="none"/></svg>
<div class="a" style="left:208px;top:160px;width:1px;height:20px;background:#c8c8c8"></div>
<svg class="a" style="left:219px;top:161px" width="20" height="19" viewBox="0 0 20 19" ><path d="M0 9L9 1V6H19V12H9V17Z" fill="#2a6fd0" stroke="#184a90" stroke-width="0.8"/></svg>
<svg class="a" style="left:248px;top:161px" width="20" height="19" viewBox="0 0 20 19" ><path d="M19 9L10 1V6H1V12H10V17Z" fill="#c5c5c5"/></svg>
<div class="a" style="left:277px;top:160px;width:1px;height:20px;background:#c8c8c8"></div>
<svg class="a" style="left:287px;top:158px" width="22" height="22" viewBox="0 0 22 22" ><rect x="6" y="1" width="15" height="15" fill="#fff" stroke="#333" stroke-width="1.4"/><path d="M8 3L14 3L12 10L8 14Z" fill="#22c5e8"/><path d="M16 3L20 8" stroke="#555"/><path d="M1 4L1 18L5 14L8 20L11 18.5L8 13H13Z" fill="#fff" stroke="#222" stroke-width="1.2"/></svg>
<svg class="a" style="left:314px;top:169px" width="8" height="5" viewBox="0 0 8 5" ><path d="M0 0H8L4 4.5Z" fill="#000"/></svg>
<svg class="a" style="left:335px;top:159px" width="17" height="19" viewBox="0 0 17 19" ><rect x="1" y="1" width="15" height="16" fill="#f4f4f4" stroke="#c4c4c4" stroke-width="1.3"/><path d="M4 4L9 8L8 16M9 8L14 3" stroke="#c8c8c8" fill="none"/></svg>
<div class="a" style="left:361px;top:160px;width:1px;height:20px;background:#c8c8c8"></div>
<svg class="a" style="left:375px;top:161px" width="16" height="20" viewBox="0 0 16 20" ><path d="M1 1L1 16L5 12L9 19L12 17.5L8.5 11H14Z" fill="#111"/></svg>
<div class="a" style="left:400px;top:160px;width:1px;height:20px;background:#c8c8c8"></div>
<svg class="a" style="left:409px;top:160px" width="21" height="21" viewBox="0 0 21 21" ><circle cx="10.5" cy="10.5" r="10" fill="#1e5fc2"/><circle cx="10.5" cy="10.5" r="10" fill="none" stroke="#0e3a8a" stroke-width="0.8"/><circle cx="11" cy="5.5" r="1.6" fill="#fff"/><path d="M8 9H12V15H13.5V16.5H8V15H9.5V10.5H8Z" fill="#fff"/></svg>
<svg class="a" style="left:442px;top:160px" width="19" height="22" viewBox="0 0 19 22" ><path d="M12 1L3 12H9L5 21L16 8H10L15 1Z" fill="#e2e2e2" stroke="#c0c0c0"/></svg>
<svg class="a" style="left:470px;top:160px" width="21" height="21" viewBox="0 0 21 21" ><path d="M1 2H20V15H8L4 20V15H1Z" fill="#fff" stroke="#333" stroke-width="1.3"/><rect x="4" y="5" width="4" height="4" fill="#3b8de0"/><path d="M10 6H18M10 9H18M4 12H16" stroke="#3b8de0" stroke-width="1.3"/><path d="M4 3.5H17" stroke="#3b8de0"/></svg>
<div class="a" style="left:500px;top:160px;width:1px;height:20px;background:#c8c8c8"></div>
<svg class="a" style="left:508px;top:160px" width="24" height="21" viewBox="0 0 24 21" ><path d="M1 5L5 1V4H10V6H5V9ZM22 5L18 1V4H13V6H18V9Z" fill="#1e5aa8"/><rect x="1" y="13" width="22" height="7" fill="#d99b40" stroke="#7a4a10"/><path d="M4 13V16M7 13V17M10 13V16M13 13V17M16 13V16M19 13V17" stroke="#fff" stroke-width="0.8"/></svg>
<div class="a" style="left:539px;top:160px;width:1px;height:20px;background:#c8c8c8"></div>
<svg class="a" style="left:547px;top:160px" width="21" height="21" viewBox="0 0 21 21" ><path d="M2 4H8V20H1Z M13 4H19L20 20H13Z" fill="#333"/><rect x="7" y="8" width="7" height="6" fill="#555"/><rect x="3" y="1" width="4" height="4" fill="#444"/><rect x="14" y="1" width="4" height="4" fill="#444"/><path d="M3 8V18M15 8V18" stroke="#888"/></svg>
<svg class="a" style="left:579px;top:159px" width="22" height="22" viewBox="0 0 22 22" ><circle cx="3.5" cy="18" r="2.2" fill="none" stroke="#2a7ad0" stroke-width="1.4"/><circle cx="3.5" cy="9" r="2.2" fill="none" stroke="#2a7ad0" stroke-width="1.4"/><path d="M3.5 11V16M5.5 8L11 3H16" stroke="#2a7ad0" stroke-width="1.5" fill="none"/><path d="M16 0L21 3L16 6Z" fill="#2a7ad0"/><rect x="9" y="11" width="12" height="10" fill="#fff" stroke="#333" stroke-width="1.2"/><path d="M12 14H18M12 17H18" stroke="#2a7ad0"/></svg>
<svg class="a" style="left:611px;top:159px" width="19" height="22" viewBox="0 0 19 22" ><circle cx="9" cy="4.5" r="3.5" fill="none" stroke="#1e5aa8" stroke-width="1.6"/><circle cx="9" cy="4.5" r="1" fill="#1e5aa8"/><text x="0" y="21" font-family="Liberation Sans" font-weight="bold" font-size="11" fill="#1e5aa8">XY</text></svg>
<div class="a" style="left:638px;top:160px;width:1px;height:20px;background:#c8c8c8"></div>
<svg class="a" style="left:647px;top:159px" width="23" height="21" viewBox="0 0 23 21" ><rect x="1" y="1" width="21" height="19" fill="#eee" stroke="#c8c8c8" stroke-width="1.3"/><rect x="1" y="1" width="21" height="3" fill="#ddd"/><circle cx="11.5" cy="12" r="6" fill="none" stroke="#c8c8c8" stroke-width="1.4"/><path d="M11.5 8V12H14" stroke="#c8c8c8"/></svg>
<div class="a" style="left:677px;top:160px;width:1px;height:20px;background:#c8c8c8"></div>
<svg class="a" style="left:685px;top:158px" width="23" height="23" viewBox="0 0 23 23" ><rect x="1" y="1" width="21" height="18" fill="#fff" stroke="#333" stroke-width="1.4"/><rect x="1" y="1" width="21" height="3" fill="#2b5fc7"/><circle cx="10" cy="12" r="5" fill="#fff" stroke="#222" stroke-width="1.4"/><path d="M10 9V15M7 12H13" stroke="#111" stroke-width="1.5"/><path d="M14 16L19 21" stroke="#7a3a1a" stroke-width="2.5"/></svg>
<div class="a" style="left:714px;top:157px;width:16px;height:31px;background:linear-gradient(#f2f2f2,#a8a8a8);border-radius:0 0 2px 2px"></div><svg class="a" style="left:717px;top:174px" width="9" height="10" viewBox="0 0 9 10" ><rect x="0.5" y="0" width="8" height="1.6" fill="#111"/><path d="M0 3.5H9L4.5 9Z" fill="#111"/></svg>
<div class="a" style="left:713px;top:190px;width:515px;height:34px;background:linear-gradient(#fbfbfb,#f3f3f3);border-radius:3px"></div>
<div class="a" style="left:717px;top:197.0px;width:2px;height:2px;background:#9a9a9a;border-radius:1px"></div><div class="a" style="left:717px;top:202.3px;width:2px;height:2px;background:#9a9a9a;border-radius:1px"></div><div class="a" style="left:717px;top:207.6px;width:2px;height:2px;background:#9a9a9a;border-radius:1px"></div><div class="a" style="left:717px;top:212.9px;width:2px;height:2px;background:#9a9a9a;border-radius:1px"></div>
<svg class="a" style="left:726px;top:196px" width="23" height="23" viewBox="0 0 23 23" ><path d="M2 2H16L21 7V21H2Z" fill="#f2f2f2" stroke="#bdbdbd" stroke-width="1.3"/><path d="M16 2V7H21" fill="none" stroke="#c8c8c8"/><circle cx="8" cy="11" r="6" fill="#e8e8e8" stroke="#b8b8b8" stroke-width="1.4"/><path d="M8 8V14M5 11H11" stroke="#aaa" stroke-width="2"/></svg>
<svg class="a" style="left:756px;top:196px" width="23" height="23" viewBox="0 0 23 23" ><path d="M2 2H16L21 7V21H2Z" fill="#f2f2f2" stroke="#bdbdbd" stroke-width="1.3"/><path d="M16 2V7H21" fill="none" stroke="#c8c8c8"/><circle cx="8" cy="11" r="6" fill="#e8e8e8" stroke="#b8b8b8" stroke-width="1.4"/><path d="M5 11H11" stroke="#aaa" stroke-width="2"/></svg>
<svg class="a" style="left:787px;top:196px" width="23" height="23" viewBox="0 0 23 23" ><path d="M2 2H16L21 7V21H2Z" fill="#f2f2f2" stroke="#bdbdbd" stroke-width="1.3"/><path d="M16 2V7H21" fill="none" stroke="#c8c8c8"/><path d="M5 20Q2 15 3 12L5 11L7 14V5Q8 4 9 5V11V3Q10 2 11 3V11V4Q12 3 13 4V11V6Q14 5 15 6V14Q15 19 12 21Z" fill="#f0f0f0" stroke="#b0b0b0"/></svg>
<svg class="a" style="left:818px;top:196px" width="23" height="23" viewBox="0 0 23 23" ><path d="M2 2H16L21 7V21H2Z" fill="#f2f2f2" stroke="#bdbdbd" stroke-width="1.3"/><path d="M16 2V7H21" fill="none" stroke="#c8c8c8"/><path d="M11.5 4L15 8H8Z M11.5 19L15 15H8Z M4 11.5L8 8V15Z M19 11.5L15 8V15Z" fill="#c0c0c0"/><rect x="8" y="8" width="7" height="7" fill="#ddd"/></svg>
<svg class="a" style="left:849px;top:196px" width="23" height="23" viewBox="0 0 23 23" ><path d="M2 2H16L21 7V21H2Z" fill="#f2f2f2" stroke="#bdbdbd" stroke-width="1.3"/><path d="M16 2V7H21" fill="none" stroke="#c8c8c8"/><rect x="4" y="5" width="15" height="3" fill="#ccc"/><text x="4" y="19" font-family="Liberation Sans" font-weight="bold" font-size="10" fill="#b0b0b0">1:1</text></svg>
<div class="a" style="left:877px;top:197px;width:1px;height:20px;background:#c8c8c8"></div>
<svg class="a" style="left:888px;top:196px" width="23" height="23" viewBox="0 0 23 23" ><path d="M2 2H16L21 7V21H2Z" fill="#f2f2f2" stroke="#bdbdbd" stroke-width="1.3"/><path d="M16 2V7H21" fill="none" stroke="#c8c8c8"/><path d="M5 6L9 10M9 7V10H6M18 6L14 10M14 7V10H17M5 18L9 14M6 14H9V17M18 18L14 14M17 14H14V17" stroke="#b0b0b0" stroke-width="1.8" fill="none"/></svg>
<svg class="a" style="left:918px;top:196px" width="23" height="23" viewBox="0 0 23 23" ><path d="M2 2H16L21 7V21H2Z" fill="#f2f2f2" stroke="#bdbdbd" stroke-width="1.3"/><path d="M16 2V7H21" fill="none" stroke="#c8c8c8"/><path d="M9 6H5V10M5 6L9 10M14 6H18V10M18 6L14 10M5 14V18H9M5 18L9 14M18 14V18H14M18 18L14 14" stroke="#b0b0b0" stroke-width="1.8" fill="none"/></svg>
<div class="a" style="left:946px;top:197px;width:1px;height:20px;background:#c8c8c8"></div>
<svg class="a" style="left:957px;top:196px" width="23" height="23" viewBox="0 0 23 23" ><path d="M2 2H16L21 7V21H2Z" fill="#f2f2f2" stroke="#bdbdbd" stroke-width="1.3"/><path d="M16 2V7H21" fill="none" stroke="#c8c8c8"/><path d="M2 12L10 5V9H18V15H10V19Z" fill="#d0d0d0" stroke="#bbb"/></svg>
<svg class="a" style="left:987px;top:196px" width="23" height="23" viewBox="0 0 23 23" ><path d="M2 2H16L21 7V21H2Z" fill="#f2f2f2" stroke="#bdbdbd" stroke-width="1.3"/><path d="M16 2V7H21" fill="none" stroke="#c8c8c8"/><path d="M21 12L13 5V9H4V15H13V19Z" fill="#d0d0d0" stroke="#bbb"/></svg>
<div class="a" style="left:1012px;top:191px;width:84px;height:32px;background:#fff;border:1px solid #c8c8c8;box-sizing:border-box"></div>
<div class="a" style="left:1016px;top:195px;width:46px;height:22px;background:#0078d7"></div>
<div class="a t" style="left:1016px;top:197px;font-family:'Liberation Mono',monospace;font-size:19px;letter-spacing:-1.9px;color:#6d7886;-webkit-text-stroke:0">100%</div>
<svg class="a" style="left:1073px;top:206px" width="14" height="9" viewBox="0 0 14 9" ><path d="M1 1L7 7L13 1" stroke="#999" stroke-width="1.3" fill="none"/></svg>
<div class="a" style="left:1099px;top:197px;width:1px;height:20px;background:#c8c8c8"></div>
<div class="a" style="left:1104px;top:191px;width:30px;height:31px;background:#dcebf8;border:1.5px solid #a9c4dc;box-sizing:border-box"></div>
<svg class="a" style="left:1108px;top:196px" width="23" height="23" viewBox="0 0 23 23" ><path d="M2 2H16L21 7V21H2Z" fill="#f2f2f2" stroke="#bdbdbd" stroke-width="1.3"/><path d="M16 2V7H21" fill="none" stroke="#c8c8c8"/><rect x="4" y="7" width="14" height="11" fill="none" stroke="#b8b8b8" stroke-width="1.4"/><path d="M8 12H14" stroke="#aaa" stroke-width="1.5"/></svg>
<svg class="a" style="left:1140px;top:196px" width="23" height="23" viewBox="0 0 23 23" ><path d="M2 2H16L21 7V21H2Z" fill="#f2f2f2" stroke="#bdbdbd" stroke-width="1.3"/><path d="M16 2V7H21" fill="none" stroke="#c8c8c8"/><rect x="4" y="6" width="14" height="13" fill="#ddd" stroke="#bbb" stroke-dasharray="1.5 1"/></svg>
<svg class="a" style="left:1168px;top:195px" width="23" height="24" viewBox="0 0 23 24" ><path d="M5 8Q10 0 17 4" stroke="#1e5aa8" stroke-width="2.6" fill="none"/><path d="M15 1L21 5L15 8Z" fill="#1e5aa8"/><rect x="1" y="10" width="9" height="13" fill="#fff" stroke="#333" stroke-width="1.3"/><rect x="13" y="10" width="9" height="13" fill="#fff" stroke="#333" stroke-width="1.3"/><rect x="3" y="13" width="4" height="4" fill="#2a7ad0"/><rect x="16" y="13" width="4" height="4" fill="#2a7ad0"/></svg>
<svg class="a" style="left:1199px;top:195px" width="23" height="24" viewBox="0 0 23 24" ><rect x="7" y="1" width="14" height="13" fill="#fff" stroke="#333" stroke-width="1.2"/><rect x="4" y="4" width="14" height="13" fill="#fff" stroke="#333" stroke-width="1.2"/><rect x="1" y="8" width="14" height="11" fill="#fff" stroke="#333" stroke-width="1.2"/><rect x="11" y="10" width="7" height="6" fill="#5cb84a"/><rect x="13" y="11" width="4" height="3" fill="#2a7ad0"/><rect x="1" y="19" width="17" height="4" fill="#2a6fd0" stroke="#143a7a"/></svg>
<div class="a" style="left:1228px;top:192px;width:15px;height:35px;background:linear-gradient(#f2f2f2,#a8a8a8);border-radius:0 0 2px 2px"></div><svg class="a" style="left:1231px;top:213px" width="9" height="10" viewBox="0 0 9 10" ><rect x="0.5" y="0" width="8" height="1.6" fill="#111"/><path d="M0 3.5H9L4.5 9Z" fill="#111"/></svg>
<div class="a" style="left:1289px;top:190px;width:286px;height:34px;background:linear-gradient(#fbfbfb,#f3f3f3);border-radius:3px"></div>
<div class="a" style="left:1293px;top:197.0px;width:2px;height:2px;background:#9a9a9a;border-radius:1px"></div><div class="a" style="left:1293px;top:202.3px;width:2px;height:2px;background:#9a9a9a;border-radius:1px"></div><div class="a" style="left:1293px;top:207.6px;width:2px;height:2px;background:#9a9a9a;border-radius:1px"></div><div class="a" style="left:1293px;top:212.9px;width:2px;height:2px;background:#9a9a9a;border-radius:1px"></div>
<svg class="a" style="left:1303px;top:197px" width="20" height="21" viewBox="0 0 20 21" ><path d="M1 1L20 10L1 20L5 10Z" fill="#1aa3ec"/><path d="M1 1L20 10L5 10Z" fill="#5cc8f8"/></svg>
<svg class="a" style="left:1334px;top:196px" width="21" height="21" viewBox="0 0 21 21" ><path d="M1 1H20V15H13L10.5 20L8 15H1Z" fill="#4db52a" stroke="#2a8a10" stroke-width="0.8"/><circle cx="10.5" cy="4" r="1.5" fill="#fff"/><path d="M8.5 6.5H11.5V11.5H13V13H8V11.5H9.5V8H8.5Z" fill="#fff"/></svg>
<svg class="a" style="left:1364px;top:196px" width="22" height="22" viewBox="0 0 22 22" ><circle cx="11" cy="11" r="10" fill="none" stroke="url(#rb)" stroke-width="6"/><defs><linearGradient id="rb" x1="0" y1="0" x2="1" y2="1"><stop offset="0" stop-color="#9ad86a"/><stop offset="0.35" stop-color="#f8d070"/><stop offset="0.65" stop-color="#f59a8a"/><stop offset="1" stop-color="#a898e8"/></linearGradient></defs></svg>
<svg class="a" style="left:1395px;top:196px" width="21" height="22" viewBox="0 0 21 22" ><path d="M1 21A19 19 0 0 1 20 2V7A14 14 0 0 0 6 21Z" fill="#f33"/><path d="M6 21A14 14 0 0 1 20 7V11A10 10 0 0 0 10 21Z" fill="#f90"/><path d="M10 21A10 10 0 0 1 20 11V14A7 7 0 0 0 13 21Z" fill="#6c3"/><path d="M13 21A7 7 0 0 1 20 14V21Z" fill="#89f"/></svg>
<div class="a t" style="left:1427px;top:198px;transform:scaleX(0.9853);transform-origin:0 0;font-size:17px">选择地图类型</div>
<svg class="a" style="left:1530px;top:206px" width="8" height="5" viewBox="0 0 8 5" ><path d="M0 0H8L4 4.5Z" fill="#000"/></svg>
<svg class="a" style="left:1546px;top:195px" width="23" height="23" viewBox="0 0 23 23" ><path d="M6 1H17L22 6V17L17 22H6L1 17V6Z" fill="#1aa8a8"/><path d="M6 1H17L22 6V11H1V6Z" fill="#555"/><circle cx="11.5" cy="11.5" r="6" fill="none" stroke="#fff" stroke-width="2"/><circle cx="11.5" cy="11.5" r="1.6" fill="#fff"/></svg>
<div class="a" style="left:1575px;top:192px;width:15px;height:35px;background:linear-gradient(#f2f2f2,#a8a8a8);border-radius:0 0 2px 2px"></div><svg class="a" style="left:1578px;top:213px" width="9" height="10" viewBox="0 0 9 10" ><rect x="0.5" y="0" width="8" height="1.6" fill="#111"/><path d="M0 3.5H9L4.5 9Z" fill="#111"/></svg>
<div class="a" style="left:0px;top:225px;width:336px;height:31px;background:linear-gradient(90deg,#c3d1e0,#d4e2f0)"></div>
<div class="a t" style="left:6px;top:232px;transform:scaleX(0.9926);transform-origin:0 0;font-size:17px">内容列表</div>
<svg class="a" style="left:300px;top:232px" width="13" height="15" viewBox="0 0 13 15" ><path d="M3 1H10V8H12V9.5H7.3V14.5H5.7V9.5H1V8H3Z" fill="#111"/><rect x="8" y="1" width="1.5" height="7" fill="#d0dcea"/></svg>
<svg class="a" style="left:322px;top:235px" width="12" height="11" viewBox="0 0 12 11" ><path d="M1 1L11 10M11 1L1 10" stroke="#000" stroke-width="2"/></svg>
<div class="a" style="left:0px;top:256px;width:336px;height:36px;background:linear-gradient(#f9f9f9,#eeeeee)"></div>
<div class="a" style="left:5px;top:259px;width:31px;height:30px;background:#dcebf8;border:2px solid #2f88e0;border-radius:2px;box-sizing:border-box"></div>
<svg class="a" style="left:9px;top:263px" width="23" height="22" viewBox="0 0 23 22" ><circle cx="4" cy="4" r="3.5" fill="#f3c45a" stroke="#c89030" stroke-width="0.8"/><path d="M10 7L14 10L10 13L6 10Z M10 15L14 18L10 21L6 18Z" fill="#f5cf6a" stroke="#c89030" stroke-width="0.8"/><path d="M4 8V18H6M4 10H6" stroke="#7aaad8" fill="none"/><rect x="17" y="9" width="4" height="2" fill="#1a5aa8"/><rect x="17" y="17" width="4" height="2" fill="#1a5aa8"/></svg>
<svg class="a" style="left:41px;top:262px" width="17" height="23" viewBox="0 0 17 23" ><path d="M1 14H16L8.5 22Z" fill="#f3c45a" stroke="#c89030" stroke-width="0.8"/><path d="M2 4V15Q8.5 18 15 15V4Z" fill="#c8d8e8" stroke="#556a80" stroke-width="0.8"/><ellipse cx="8.5" cy="4" rx="6.5" ry="2.5" fill="#e8f0f8" stroke="#556a80" stroke-width="0.8"/></svg>
<svg class="a" style="left:70px;top:262px" width="23" height="23" viewBox="0 0 23 23" ><path d="M11.5 8L22 15L11.5 22L1 15Z" fill="#eee" stroke="#777" stroke-width="1.2"/><path d="M11.5 1L22 8.5L11.5 16L1 8.5Z" fill="#f5cf6a" stroke="#c89030" stroke-width="1"/></svg>
<svg class="a" style="left:101px;top:262px" width="23" height="23" viewBox="0 0 23 23" ><path d="M1 14H22L11.5 22Z" fill="#f3c45a" stroke="#c89030" stroke-width="0.8"/><rect x="5" y="1" width="14" height="13" fill="#fff" stroke="#333" stroke-width="1.4"/><path d="M6 2H10L13 13H6Z" fill="#18c8e8"/><path d="M13 4Q15 5 16 4" stroke="#333"/></svg>
<div class="a" style="left:131px;top:265px;width:1px;height:21px;background:#c8c8c8"></div>
<svg class="a" style="left:141px;top:264px" width="19" height="21" viewBox="0 0 19 21" ><rect x="1" y="1" width="17" height="19" fill="#fff" stroke="#3a4a6a" stroke-width="1.4"/><circle cx="5" cy="5" r="1.5" fill="#333"/><circle cx="5" cy="15" r="1.5" fill="#333"/><path d="M8 5H15M8 10H15M8 15H15" stroke="#6a8ab8" stroke-width="1.4"/></svg>
<div class="a" style="left:0px;top:292px;width:336px;height:2px;background:#9ea3ab"></div>
<div class="a" style="left:0px;top:294px;width:336px;height:934px;background:#fff"></div>
<div class="a" style="left:0px;top:292px;width:2px;height:936px;background:#717885"></div>
<div class="a" style="left:336px;top:225px;width:4px;height:1003px;background:#f3f3f3"></div>
<div class="a" style="left:338px;top:256px;width:2px;height:972px;background:#fff"></div>
<svg class="a" style="left:12px;top:306px" width="13" height="13" viewBox="0 0 13 13" ><rect x="0.75" y="0.75" width="11.5" height="11.5" rx="1.5" fill="#fbfbfb" stroke="#9a9a9a" stroke-width="1.5"/><path d="M3 6.5H10" stroke="#4458a8" stroke-width="1.6"/></svg>
<svg class="a" style="left:33px;top:301px" width="23" height="19" viewBox="0 0 23 19" ><path d="M4 12H22L18 18H1Z" fill="#f0c060" stroke="#c08020" stroke-width="0.8"/><path d="M4 7H22L18 13H1Z" fill="#f5d070" stroke="#c08020" stroke-width="0.8"/><path d="M4 2H22L18 8H1Z" fill="#f9dc8a" stroke="#c08020" stroke-width="0.8"/></svg>
<div class="a t" style="left:62px;top:299px;transform:scaleX(1.0119);transform-origin:0 0;font-size:21px;font-weight:bold">图层</div>
<svg class="a" style="left:38px;top:338px" width="13" height="13" viewBox="0 0 13 13" ><rect x="0.75" y="0.75" width="11.5" height="11.5" rx="1.5" fill="#fbfbfb" stroke="#9a9a9a" stroke-width="1.5"/><path d="M3 6.5H10" stroke="#4458a8" stroke-width="1.6"/></svg>
<svg class="a" style="left:62px;top:335px" width="16" height="16" viewBox="0 0 16 16" ><rect x="0.75" y="0.75" width="14.5" height="14.5" fill="#fff" stroke="#111" stroke-width="1.5"/><path d="M3.5 8L6.5 11L12.5 4" stroke="#000" stroke-width="2" fill="none"/></svg>
<div class="a t" style="left:88px;top:331px;transform:scaleX(1.0166);transform-origin:0 0;font-size:21px">无标题_Omap_Track</div>
<svg class="a" style="left:65px;top:370px" width="13" height="13" viewBox="0 0 13 13" ><rect x="0.75" y="0.75" width="11.5" height="11.5" rx="1.5" fill="#fbfbfb" stroke="#9a9a9a" stroke-width="1.5"/><path d="M3 6.5H10" stroke="#4458a8" stroke-width="1.6"/></svg>
<svg class="a" style="left:88px;top:367px" width="16" height="16" viewBox="0 0 16 16" ><rect x="0.75" y="0.75" width="14.5" height="14.5" fill="#fff" stroke="#111" stroke-width="1.5"/><path d="M3.5 8L6.5 11L12.5 4" stroke="#000" stroke-width="2" fill="none"/></svg>
<div class="a t" style="left:114px;top:363px;transform:scaleX(1.0165);transform-origin:0 0;font-size:21px">公路_4548_Track</div>
<div class="a t" style="left:141px;top:395px;font-size:21px">O_LClr</div>
<div class="a" style="left:106px;top:437px;width:21px;height:3px;background:#0000ff"></div>
<div class="a t" style="left:135px;top:427px;transform:scaleX(1.083);transform-origin:0 0;font-size:21px">16711680</div>
<div class="a" style="left:106px;top:469px;width:21px;height:3px;background:#ff0000"></div>
<div class="a t" style="left:135px;top:459px;transform:scaleX(1.0415);transform-origin:0 0;font-size:21px">255</div>
<div class="a t" style="left:135px;top:491px;transform:scaleX(1.0649);transform-origin:0 0;font-size:21px">16777215</div>
<div class="a" style="left:106px;top:533px;width:21px;height:3px;background:#00ff00"></div>
<div class="a t" style="left:135px;top:523px;transform:scaleX(1.0701);transform-origin:0 0;font-size:21px">65280</div>
<div class="a" style="left:106px;top:565px;width:21px;height:3px;background:#000000"></div>
<div class="a t" style="left:135px;top:555px;transform:scaleX(1.0695);transform-origin:0 0;font-size:21px">0</div>
<svg class="a" style="left:38px;top:592px" width="13" height="13" viewBox="0 0 13 13" ><rect x="0.75" y="0.75" width="11.5" height="11.5" rx="1.5" fill="#fbfbfb" stroke="#9a9a9a" stroke-width="1.5"/><path d="M3 6.5H10" stroke="#4458a8" stroke-width="1.6"/></svg>
<svg class="a" style="left:62px;top:589px" width="16" height="16" viewBox="0 0 16 16" ><rect x="0.75" y="0.75" width="14.5" height="14.5" fill="#fff" stroke="#111" stroke-width="1.5"/></svg>
<div class="a" style="left:86px;top:582px;width:88px;height:31px;background:#0078d7"></div>
<div class="a t" style="left:89px;top:586px;transform:scaleX(0.994);transform-origin:0 0;font-size:21px;color:#fff;-webkit-text-stroke:0.1px #fff">奥体中心</div>
<div class="a" style="left:80px;top:623px;width:21px;height:15px;background:#c8ecc8;border:1.5px solid #8a8a8a;box-sizing:border-box"></div>
<div class="a" style="left:340px;top:224px;width:311px;height:30px;background:linear-gradient(90deg,#c3d1e0,#d4e2f0)"></div>
<div class="a t" style="left:345px;top:230px;transform:scaleX(1.1235);transform-origin:0 0;font-size:17px">ArcToolbox</div>
<svg class="a" style="left:609px;top:231px" width="13" height="13" viewBox="0 0 13 13" ><rect x="1" y="1" width="11" height="11" fill="none" stroke="#000" stroke-width="1.6"/><rect x="1" y="1" width="11" height="2.5" fill="#000"/></svg>
<svg class="a" style="left:632px;top:232px" width="12" height="11" viewBox="0 0 12 11" ><path d="M1 1L11 10M11 1L1 10" stroke="#000" stroke-width="2"/></svg>
<div class="a" style="left:340px;top:254px;width:312px;height:3px;background:#f3f3f3"></div>
<div class="a" style="left:340px;top:256px;width:312px;height:972px;background:#fff;border-left:2px solid #9ca0a8;border-top:2px solid #9ca0a8;border-right:2px solid #9ca0a8;box-sizing:border-box"></div>
<div class="a" style="left:652px;top:219px;width:2px;height:1009px;background:#e6e6e6"></div>
<div class="a" style="left:654px;top:219px;width:2px;height:1009px;background:#1a1a1a"></div>
<svg class="a" style="left:348px;top:262px" width="22" height="21" viewBox="0 0 22 21" ><path d="M1 4 H8 L10 1.5 H20.5 V18.5 H1 Z" fill="#fffbe6" stroke="#8a7a20" stroke-width="1.4"/><path d="M2 4.5 H19.5 V7.5 H2Z" fill="#f2e07a"/></svg>
<svg class="a" style="left:350px;top:266px" width="19" height="17" viewBox="0 0 19 17" ><path d="M0.5 3 L8 0.5 L18.5 6.5 L12 9 Z" fill="#de4f42"/><path d="M0.5 3 L12 9 L12 16.5 L0.5 11 Z" fill="#c9352b"/><path d="M12 9 L18.5 6.5 L18.5 14 L12 16.5 Z" fill="#a0241b"/><path d="M6 2.8 Q9 0 13 3.5" stroke="#2a2a2a" stroke-width="1.8" fill="none"/><path d="M0.5 6 L12 12 L18.5 9.5" stroke="#5e120d" stroke-width="0.8" fill="none"/></svg>
<div class="a t" style="left:376px;top:264px;transform:scaleX(1.1235);transform-origin:0 0;font-size:17px">ArcToolbox</div>
<svg class="a" style="left:352px;top:294px" width="13" height="13" viewBox="0 0 13 13" ><rect x="0.75" y="0.75" width="11.5" height="11.5" rx="1.5" fill="#fbfbfb" stroke="#9a9a9a" stroke-width="1.5"/><path d="M3 6.5H10" stroke="#4458a8" stroke-width="1.6"/><path d="M6.5 3V10" stroke="#4458a8" stroke-width="1.6"/></svg>
<svg class="a" style="left:373px;top:289px" width="24" height="22" viewBox="0 0 24 22" ><path d="M0.5 4 L10 1 L23.5 8.5 L15 12 Z" fill="#de4f42"/>
<path d="M0.5 4 L15 12 L15 21.5 L0.5 14.5 Z" fill="#c9352b"/><path d="M15 12 L23.5 8.5 L23.5 18 L15 21.5 Z" fill="#a0241b"/>
<path d="M0.5 7.5 L15 15.5 L23.5 12" stroke="#5e120d" stroke-width="0.9" fill="none"/>
<path d="M7.5 3.5 Q11 0 17 4.5" stroke="#2a2a2a" stroke-width="2.2" fill="none"/>
<path d="M5 7.5 L7 8.6 V13 L5 11.9Z" fill="#d8d8d8" stroke="#555" stroke-width="0.5"/></svg>
<div class="a t" style="left:403px;top:291px;transform:scaleX(1.0292);transform-origin:0 0;font-size:17px">3D Analyst 工具</div>
<svg class="a" style="left:352px;top:321px" width="13" height="13" viewBox="0 0 13 13" ><rect x="0.75" y="0.75" width="11.5" height="11.5" rx="1.5" fill="#fbfbfb" stroke="#9a9a9a" stroke-width="1.5"/><path d="M3 6.5H10" stroke="#4458a8" stroke-width="1.6"/><path d="M6.5 3V10" stroke="#4458a8" stroke-width="1.6"/></svg>
<svg class="a" style="left:373px;top:317px" width="24" height="22" viewBox="0 0 24 22" ><path d="M0.5 4 L10 1 L23.5 8.5 L15 12 Z" fill="#de4f42"/>
<path d="M0.5 4 L15 12 L15 21.5 L0.5 14.5 Z" fill="#c9352b"/><path d="M15 12 L23.5 8.5 L23.5 18 L15 21.5 Z" fill="#a0241b"/>
<path d="M0.5 7.5 L15 15.5 L23.5 12" stroke="#5e120d" stroke-width="0.9" fill="none"/>
<path d="M7.5 3.5 Q11 0 17 4.5" stroke="#2a2a2a" stroke-width="2.2" fill="none"/>
<path d="M5 7.5 L7 8.6 V13 L5 11.9Z" fill="#d8d8d8" stroke="#555" stroke-width="0.5"/></svg>
<div class="a t" style="left:403px;top:319px;transform:scaleX(1.0714);transform-origin:0 0;font-size:17px">Data Interoperability 工具</div>
<svg class="a" style="left:352px;top:349px" width="13" height="13" viewBox="0 0 13 13" ><rect x="0.75" y="0.75" width="11.5" height="11.5" rx="1.5" fill="#fbfbfb" stroke="#9a9a9a" stroke-width="1.5"/><path d="M3 6.5H10" stroke="#4458a8" stroke-width="1.6"/><path d="M6.5 3V10" stroke="#4458a8" stroke-width="1.6"/></svg>
<svg class="a" style="left:373px;top:344px" width="24" height="22" viewBox="0 0 24 22" ><path d="M0.5 4 L10 1 L23.5 8.5 L15 12 Z" fill="#de4f42"/>
<path d="M0.5 4 L15 12 L15 21.5 L0.5 14.5 Z" fill="#c9352b"/><path d="M15 12 L23.5 8.5 L23.5 18 L15 21.5 Z" fill="#a0241b"/>
<path d="M0.5 7.5 L15 15.5 L23.5 12" stroke="#5e120d" stroke-width="0.9" fill="none"/>
<path d="M7.5 3.5 Q11 0 17 4.5" stroke="#2a2a2a" stroke-width="2.2" fill="none"/>
<path d="M5 7.5 L7 8.6 V13 L5 11.9Z" fill="#d8d8d8" stroke="#555" stroke-width="0.5"/></svg>
<div class="a t" style="left:403px;top:346px;transform:scaleX(1.0359);transform-origin:0 0;font-size:17px">Geostatistical Analyst 工具</div>
<svg class="a" style="left:352px;top:376px" width="13" height="13" viewBox="0 0 13 13" ><rect x="0.75" y="0.75" width="11.5" height="11.5" rx="1.5" fill="#fbfbfb" stroke="#9a9a9a" stroke-width="1.5"/><path d="M3 6.5H10" stroke="#4458a8" stroke-width="1.6"/><path d="M6.5 3V10" stroke="#4458a8" stroke-width="1.6"/></svg>
<svg class="a" style="left:373px;top:372px" width="24" height="22" viewBox="0 0 24 22" ><path d="M0.5 4 L10 1 L23.5 8.5 L15 12 Z" fill="#de4f42"/>
<path d="M0.5 4 L15 12 L15 21.5 L0.5 14.5 Z" fill="#c9352b"/><path d="M15 12 L23.5 8.5 L23.5 18 L15 21.5 Z" fill="#a0241b"/>
<path d="M0.5 7.5 L15 15.5 L23.5 12" stroke="#5e120d" stroke-width="0.9" fill="none"/>
<path d="M7.5 3.5 Q11 0 17 4.5" stroke="#2a2a2a" stroke-width="2.2" fill="none"/>
<path d="M5 7.5 L7 8.6 V13 L5 11.9Z" fill="#d8d8d8" stroke="#555" stroke-width="0.5"/></svg>
<div class="a t" style="left:403px;top:374px;transform:scaleX(1.0616);transform-origin:0 0;font-size:17px">Network Analyst 工具</div>
<svg class="a" style="left:352px;top:404px" width="13" height="13" viewBox="0 0 13 13" ><rect x="0.75" y="0.75" width="11.5" height="11.5" rx="1.5" fill="#fbfbfb" stroke="#9a9a9a" stroke-width="1.5"/><path d="M3 6.5H10" stroke="#4458a8" stroke-width="1.6"/><path d="M6.5 3V10" stroke="#4458a8" stroke-width="1.6"/></svg>
<svg class="a" style="left:373px;top:400px" width="24" height="22" viewBox="0 0 24 22" ><path d="M0.5 4 L10 1 L23.5 8.5 L15 12 Z" fill="#de4f42"/>
<path d="M0.5 4 L15 12 L15 21.5 L0.5 14.5 Z" fill="#c9352b"/><path d="M15 12 L23.5 8.5 L23.5 18 L15 21.5 Z" fill="#a0241b"/>
<path d="M0.5 7.5 L15 15.5 L23.5 12" stroke="#5e120d" stroke-width="0.9" fill="none"/>
<path d="M7.5 3.5 Q11 0 17 4.5" stroke="#2a2a2a" stroke-width="2.2" fill="none"/>
<path d="M5 7.5 L7 8.6 V13 L5 11.9Z" fill="#d8d8d8" stroke="#555" stroke-width="0.5"/></svg>
<div class="a t" style="left:403px;top:402px;transform:scaleX(1.0072);transform-origin:0 0;font-size:17px">Schematics 工具</div>
<svg class="a" style="left:352px;top:432px" width="13" height="13" viewBox="0 0 13 13" ><rect x="0.75" y="0.75" width="11.5" height="11.5" rx="1.5" fill="#fbfbfb" stroke="#9a9a9a" stroke-width="1.5"/><path d="M3 6.5H10" stroke="#4458a8" stroke-width="1.6"/><path d="M6.5 3V10" stroke="#4458a8" stroke-width="1.6"/></svg>
<svg class="a" style="left:373px;top:427px" width="24" height="22" viewBox="0 0 24 22" ><path d="M0.5 4 L10 1 L23.5 8.5 L15 12 Z" fill="#de4f42"/>
<path d="M0.5 4 L15 12 L15 21.5 L0.5 14.5 Z" fill="#c9352b"/><path d="M15 12 L23.5 8.5 L23.5 18 L15 21.5 Z" fill="#a0241b"/>
<path d="M0.5 7.5 L15 15.5 L23.5 12" stroke="#5e120d" stroke-width="0.9" fill="none"/>
<path d="M7.5 3.5 Q11 0 17 4.5" stroke="#2a2a2a" stroke-width="2.2" fill="none"/>
<path d="M5 7.5 L7 8.6 V13 L5 11.9Z" fill="#d8d8d8" stroke="#555" stroke-width="0.5"/></svg>
<div class="a t" style="left:403px;top:429px;transform:scaleX(1.0349);transform-origin:0 0;font-size:17px">Spatial Analyst 工具</div>
<svg class="a" style="left:352px;top:459px" width="13" height="13" viewBox="0 0 13 13" ><rect x="0.75" y="0.75" width="11.5" height="11.5" rx="1.5" fill="#fbfbfb" stroke="#9a9a9a" stroke-width="1.5"/><path d="M3 6.5H10" stroke="#4458a8" stroke-width="1.6"/><path d="M6.5 3V10" stroke="#4458a8" stroke-width="1.6"/></svg>
<svg class="a" style="left:373px;top:455px" width="24" height="22" viewBox="0 0 24 22" ><path d="M0.5 4 L10 1 L23.5 8.5 L15 12 Z" fill="#de4f42"/>
<path d="M0.5 4 L15 12 L15 21.5 L0.5 14.5 Z" fill="#c9352b"/><path d="M15 12 L23.5 8.5 L23.5 18 L15 21.5 Z" fill="#a0241b"/>
<path d="M0.5 7.5 L15 15.5 L23.5 12" stroke="#5e120d" stroke-width="0.9" fill="none"/>
<path d="M7.5 3.5 Q11 0 17 4.5" stroke="#2a2a2a" stroke-width="2.2" fill="none"/>
<path d="M5 7.5 L7 8.6 V13 L5 11.9Z" fill="#d8d8d8" stroke="#555" stroke-width="0.5"/></svg>
<div class="a t" style="left:403px;top:457px;transform:scaleX(1.0472);transform-origin:0 0;font-size:17px">Tracking Analyst 工具</div>
<svg class="a" style="left:352px;top:487px" width="13" height="13" viewBox="0 0 13 13" ><rect x="0.75" y="0.75" width="11.5" height="11.5" rx="1.5" fill="#fbfbfb" stroke="#9a9a9a" stroke-width="1.5"/><path d="M3 6.5H10" stroke="#4458a8" stroke-width="1.6"/><path d="M6.5 3V10" stroke="#4458a8" stroke-width="1.6"/></svg>
<svg class="a" style="left:373px;top:483px" width="24" height="22" viewBox="0 0 24 22" ><path d="M0.5 4 L10 1 L23.5 8.5 L15 12 Z" fill="#de4f42"/>
<path d="M0.5 4 L15 12 L15 21.5 L0.5 14.5 Z" fill="#c9352b"/><path d="M15 12 L23.5 8.5 L23.5 18 L15 21.5 Z" fill="#a0241b"/>
<path d="M0.5 7.5 L15 15.5 L23.5 12" stroke="#5e120d" stroke-width="0.9" fill="none"/>
<path d="M7.5 3.5 Q11 0 17 4.5" stroke="#2a2a2a" stroke-width="2.2" fill="none"/>
<path d="M5 7.5 L7 8.6 V13 L5 11.9Z" fill="#d8d8d8" stroke="#555" stroke-width="0.5"/></svg>
<div class="a t" style="left:403px;top:485px;transform:scaleX(0.9779);transform-origin:0 0;font-size:17px">编辑工具</div>
<svg class="a" style="left:352px;top:515px" width="13" height="13" viewBox="0 0 13 13" ><rect x="0.75" y="0.75" width="11.5" height="11.5" rx="1.5" fill="#fbfbfb" stroke="#9a9a9a" stroke-width="1.5"/><path d="M3 6.5H10" stroke="#4458a8" stroke-width="1.6"/><path d="M6.5 3V10" stroke="#4458a8" stroke-width="1.6"/></svg>
<svg class="a" style="left:373px;top:510px" width="24" height="22" viewBox="0 0 24 22" ><path d="M0.5 4 L10 1 L23.5 8.5 L15 12 Z" fill="#de4f42"/>
<path d="M0.5 4 L15 12 L15 21.5 L0.5 14.5 Z" fill="#c9352b"/><path d="M15 12 L23.5 8.5 L23.5 18 L15 21.5 Z" fill="#a0241b"/>
<path d="M0.5 7.5 L15 15.5 L23.5 12" stroke="#5e120d" stroke-width="0.9" fill="none"/>
<path d="M7.5 3.5 Q11 0 17 4.5" stroke="#2a2a2a" stroke-width="2.2" fill="none"/>
<path d="M5 7.5 L7 8.6 V13 L5 11.9Z" fill="#d8d8d8" stroke="#555" stroke-width="0.5"/></svg>
<div class="a t" style="left:403px;top:512px;transform:scaleX(0.9853);transform-origin:0 0;font-size:17px">地理编码工具</div>
<svg class="a" style="left:352px;top:542px" width="13" height="13" viewBox="0 0 13 13" ><rect x="0.75" y="0.75" width="11.5" height="11.5" rx="1.5" fill="#fbfbfb" stroke="#9a9a9a" stroke-width="1.5"/><path d="M3 6.5H10" stroke="#4458a8" stroke-width="1.6"/><path d="M6.5 3V10" stroke="#4458a8" stroke-width="1.6"/></svg>
<svg class="a" style="left:373px;top:538px" width="24" height="22" viewBox="0 0 24 22" ><path d="M0.5 4 L10 1 L23.5 8.5 L15 12 Z" fill="#de4f42"/>
<path d="M0.5 4 L15 12 L15 21.5 L0.5 14.5 Z" fill="#c9352b"/><path d="M15 12 L23.5 8.5 L23.5 18 L15 21.5 Z" fill="#a0241b"/>
<path d="M0.5 7.5 L15 15.5 L23.5 12" stroke="#5e120d" stroke-width="0.9" fill="none"/>
<path d="M7.5 3.5 Q11 0 17 4.5" stroke="#2a2a2a" stroke-width="2.2" fill="none"/>
<path d="M5 7.5 L7 8.6 V13 L5 11.9Z" fill="#d8d8d8" stroke="#555" stroke-width="0.5"/></svg>
<div class="a t" style="left:403px;top:540px;transform:scaleX(0.9779);transform-origin:0 0;font-size:17px">多维工具</div>
<svg class="a" style="left:352px;top:570px" width="13" height="13" viewBox="0 0 13 13" ><rect x="0.75" y="0.75" width="11.5" height="11.5" rx="1.5" fill="#fbfbfb" stroke="#9a9a9a" stroke-width="1.5"/><path d="M3 6.5H10" stroke="#4458a8" stroke-width="1.6"/><path d="M6.5 3V10" stroke="#4458a8" stroke-width="1.6"/></svg>
<svg class="a" style="left:373px;top:566px" width="24" height="22" viewBox="0 0 24 22" ><path d="M0.5 4 L10 1 L23.5 8.5 L15 12 Z" fill="#de4f42"/>
<path d="M0.5 4 L15 12 L15 21.5 L0.5 14.5 Z" fill="#c9352b"/><path d="M15 12 L23.5 8.5 L23.5 18 L15 21.5 Z" fill="#a0241b"/>
<path d="M0.5 7.5 L15 15.5 L23.5 12" stroke="#5e120d" stroke-width="0.9" fill="none"/>
<path d="M7.5 3.5 Q11 0 17 4.5" stroke="#2a2a2a" stroke-width="2.2" fill="none"/>
<path d="M5 7.5 L7 8.6 V13 L5 11.9Z" fill="#d8d8d8" stroke="#555" stroke-width="0.5"/></svg>
<div class="a t" style="left:403px;top:568px;transform:scaleX(0.9779);transform-origin:0 0;font-size:17px">分析工具</div>
<svg class="a" style="left:352px;top:598px" width="13" height="13" viewBox="0 0 13 13" ><rect x="0.75" y="0.75" width="11.5" height="11.5" rx="1.5" fill="#fbfbfb" stroke="#9a9a9a" stroke-width="1.5"/><path d="M3 6.5H10" stroke="#4458a8" stroke-width="1.6"/><path d="M6.5 3V10" stroke="#4458a8" stroke-width="1.6"/></svg>
<svg class="a" style="left:373px;top:593px" width="24" height="22" viewBox="0 0 24 22" ><path d="M0.5 4 L10 1 L23.5 8.5 L15 12 Z" fill="#de4f42"/>
<path d="M0.5 4 L15 12 L15 21.5 L0.5 14.5 Z" fill="#c9352b"/><path d="M15 12 L23.5 8.5 L23.5 18 L15 21.5 Z" fill="#a0241b"/>
<path d="M0.5 7.5 L15 15.5 L23.5 12" stroke="#5e120d" stroke-width="0.9" fill="none"/>
<path d="M7.5 3.5 Q11 0 17 4.5" stroke="#2a2a2a" stroke-width="2.2" fill="none"/>
<path d="M5 7.5 L7 8.6 V13 L5 11.9Z" fill="#d8d8d8" stroke="#555" stroke-width="0.5"/></svg>
<div class="a t" style="left:403px;top:595px;transform:scaleX(0.9824);transform-origin:0 0;font-size:17px">服务器工具</div>
<svg class="a" style="left:352px;top:625px" width="13" height="13" viewBox="0 0 13 13" ><rect x="0.75" y="0.75" width="11.5" height="11.5" rx="1.5" fill="#fbfbfb" stroke="#9a9a9a" stroke-width="1.5"/><path d="M3 6.5H10" stroke="#4458a8" stroke-width="1.6"/><path d="M6.5 3V10" stroke="#4458a8" stroke-width="1.6"/></svg>
<svg class="a" style="left:373px;top:621px" width="24" height="22" viewBox="0 0 24 22" ><path d="M0.5 4 L10 1 L23.5 8.5 L15 12 Z" fill="#de4f42"/>
<path d="M0.5 4 L15 12 L15 21.5 L0.5 14.5 Z" fill="#c9352b"/><path d="M15 12 L23.5 8.5 L23.5 18 L15 21.5 Z" fill="#a0241b"/>
<path d="M0.5 7.5 L15 15.5 L23.5 12" stroke="#5e120d" stroke-width="0.9" fill="none"/>
<path d="M7.5 3.5 Q11 0 17 4.5" stroke="#2a2a2a" stroke-width="2.2" fill="none"/>
<path d="M5 7.5 L7 8.6 V13 L5 11.9Z" fill="#d8d8d8" stroke="#555" stroke-width="0.5"/></svg>
<div class="a t" style="left:403px;top:623px;transform:scaleX(0.9853);transform-origin:0 0;font-size:17px">空间统计工具</div>
<svg class="a" style="left:352px;top:653px" width="13" height="13" viewBox="0 0 13 13" ><rect x="0.75" y="0.75" width="11.5" height="11.5" rx="1.5" fill="#fbfbfb" stroke="#9a9a9a" stroke-width="1.5"/><path d="M3 6.5H10" stroke="#4458a8" stroke-width="1.6"/><path d="M6.5 3V10" stroke="#4458a8" stroke-width="1.6"/></svg>
<svg class="a" style="left:373px;top:648px" width="24" height="22" viewBox="0 0 24 22" ><path d="M0.5 4 L10 1 L23.5 8.5 L15 12 Z" fill="#de4f42"/>
<path d="M0.5 4 L15 12 L15 21.5 L0.5 14.5 Z" fill="#c9352b"/><path d="M15 12 L23.5 8.5 L23.5 18 L15 21.5 Z" fill="#a0241b"/>
<path d="M0.5 7.5 L15 15.5 L23.5 12" stroke="#5e120d" stroke-width="0.9" fill="none"/>
<path d="M7.5 3.5 Q11 0 17 4.5" stroke="#2a2a2a" stroke-width="2.2" fill="none"/>
<path d="M5 7.5 L7 8.6 V13 L5 11.9Z" fill="#d8d8d8" stroke="#555" stroke-width="0.5"/></svg>
<div class="a t" style="left:403px;top:650px;transform:scaleX(0.9853);transform-origin:0 0;font-size:17px">数据管理工具</div>
<svg class="a" style="left:352px;top:681px" width="13" height="13" viewBox="0 0 13 13" ><rect x="0.75" y="0.75" width="11.5" height="11.5" rx="1.5" fill="#fbfbfb" stroke="#9a9a9a" stroke-width="1.5"/><path d="M3 6.5H10" stroke="#4458a8" stroke-width="1.6"/><path d="M6.5 3V10" stroke="#4458a8" stroke-width="1.6"/></svg>
<svg class="a" style="left:373px;top:676px" width="24" height="22" viewBox="0 0 24 22" ><path d="M0.5 4 L10 1 L23.5 8.5 L15 12 Z" fill="#de4f42"/>
<path d="M0.5 4 L15 12 L15 21.5 L0.5 14.5 Z" fill="#c9352b"/><path d="M15 12 L23.5 8.5 L23.5 18 L15 21.5 Z" fill="#a0241b"/>
<path d="M0.5 7.5 L15 15.5 L23.5 12" stroke="#5e120d" stroke-width="0.9" fill="none"/>
<path d="M7.5 3.5 Q11 0 17 4.5" stroke="#2a2a2a" stroke-width="2.2" fill="none"/>
<path d="M5 7.5 L7 8.6 V13 L5 11.9Z" fill="#d8d8d8" stroke="#555" stroke-width="0.5"/></svg>
<div class="a t" style="left:403px;top:678px;transform:scaleX(0.9853);transform-origin:0 0;font-size:17px">线性参考工具</div>
<svg class="a" style="left:352px;top:708px" width="13" height="13" viewBox="0 0 13 13" ><rect x="0.75" y="0.75" width="11.5" height="11.5" rx="1.5" fill="#fbfbfb" stroke="#9a9a9a" stroke-width="1.5"/><path d="M3 6.5H10" stroke="#4458a8" stroke-width="1.6"/><path d="M6.5 3V10" stroke="#4458a8" stroke-width="1.6"/></svg>
<svg class="a" style="left:373px;top:704px" width="24" height="22" viewBox="0 0 24 22" ><path d="M0.5 4 L10 1 L23.5 8.5 L15 12 Z" fill="#de4f42"/>
<path d="M0.5 4 L15 12 L15 21.5 L0.5 14.5 Z" fill="#c9352b"/><path d="M15 12 L23.5 8.5 L23.5 18 L15 21.5 Z" fill="#a0241b"/>
<path d="M0.5 7.5 L15 15.5 L23.5 12" stroke="#5e120d" stroke-width="0.9" fill="none"/>
<path d="M7.5 3.5 Q11 0 17 4.5" stroke="#2a2a2a" stroke-width="2.2" fill="none"/>
<path d="M5 7.5 L7 8.6 V13 L5 11.9Z" fill="#d8d8d8" stroke="#555" stroke-width="0.5"/></svg>
<div class="a t" style="left:403px;top:706px;transform:scaleX(0.9779);transform-origin:0 0;font-size:17px">制图工具</div>
<svg class="a" style="left:352px;top:736px" width="13" height="13" viewBox="0 0 13 13" ><rect x="0.75" y="0.75" width="11.5" height="11.5" rx="1.5" fill="#fbfbfb" stroke="#9a9a9a" stroke-width="1.5"/><path d="M3 6.5H10" stroke="#4458a8" stroke-width="1.6"/><path d="M6.5 3V10" stroke="#4458a8" stroke-width="1.6"/></svg>
<svg class="a" style="left:373px;top:731px" width="24" height="22" viewBox="0 0 24 22" ><path d="M0.5 4 L10 1 L23.5 8.5 L15 12 Z" fill="#de4f42"/>
<path d="M0.5 4 L15 12 L15 21.5 L0.5 14.5 Z" fill="#c9352b"/><path d="M15 12 L23.5 8.5 L23.5 18 L15 21.5 Z" fill="#a0241b"/>
<path d="M0.5 7.5 L15 15.5 L23.5 12" stroke="#5e120d" stroke-width="0.9" fill="none"/>
<path d="M7.5 3.5 Q11 0 17 4.5" stroke="#2a2a2a" stroke-width="2.2" fill="none"/>
<path d="M5 7.5 L7 8.6 V13 L5 11.9Z" fill="#d8d8d8" stroke="#555" stroke-width="0.5"/></svg>
<div class="a t" style="left:403px;top:733px;transform:scaleX(0.9779);transform-origin:0 0;font-size:17px">转换工具</div>
<svg class="a" style="left:352px;top:764px" width="13" height="13" viewBox="0 0 13 13" ><rect x="0.75" y="0.75" width="11.5" height="11.5" rx="1.5" fill="#fbfbfb" stroke="#9a9a9a" stroke-width="1.5"/><path d="M3 6.5H10" stroke="#4458a8" stroke-width="1.6"/><path d="M6.5 3V10" stroke="#4458a8" stroke-width="1.6"/></svg>
<svg class="a" style="left:373px;top:759px" width="24" height="22" viewBox="0 0 24 22" ><path d="M0.5 4 L10 1 L23.5 8.5 L15 12 Z" fill="#de4f42"/>
<path d="M0.5 4 L15 12 L15 21.5 L0.5 14.5 Z" fill="#c9352b"/><path d="M15 12 L23.5 8.5 L23.5 18 L15 21.5 Z" fill="#a0241b"/>
<path d="M0.5 7.5 L15 15.5 L23.5 12" stroke="#5e120d" stroke-width="0.9" fill="none"/>
<path d="M7.5 3.5 Q11 0 17 4.5" stroke="#2a2a2a" stroke-width="2.2" fill="none"/>
<path d="M5 7.5 L7 8.6 V13 L5 11.9Z" fill="#d8d8d8" stroke="#555" stroke-width="0.5"/></svg>
<div class="a t" style="left:403px;top:761px;transform:scaleX(0.9853);transform-origin:0 0;font-size:17px">宗地结构工具</div>
<div class="a" style="left:656px;top:226px;width:1208px;height:2px;background:#7c7c7c"></div>
<div class="a" style="left:656px;top:228px;width:1208px;height:1000px;background:#fff"></div>
<svg class="a" style="left:656px;top:228px" width="1208" height="1000" viewBox="0 0 1208 1000"><g fill="none" stroke="#0000ff" stroke-width="3" stroke-linejoin="round" stroke-linecap="round"><path d="M164.6 164.7 L169.5 167.8 L175.2 167.5 L180.0 163.7 L188.2 163.4 L196.3 167.8 L201.2 173.2 L207.7 176.1 L215.0 176.1 L219.1 178.9 L224.0 185.4 L230.5 191.1 L238.7 193.0 L248.5 201.3 L258.2 205.7 L266.4 209.0 L268.0 213.1 L276.1 216.3 L284.3 225.3 L285.9 230.2 L284.3 234.2 L290.0 240.8 L294.1 246.5 L294.9 254.6 L300.6 257.9 L307.1 261.1 L312.0 264.9 L318.5 268.9 L334.8 268.9 L338.0 266.0 L356.8 266.0 L364.1 272.5 L383.6 290.4 L389.3 295.3 L391.0 300.5 L390.2 305.1 L394.2 314.9 L403.2 323.0 L405.6 331.2 L403.2 336.0 L405.6 349.1 L406.8 357.5 L416.6 358.3 L427.2 360.7 L430.4 366.4 L431.2 372.1 L441.0 381.9 L454.0 388.4 L462.2 395.7 L462.2 399.0 L468.7 404.7 L474.4 403.1 L487.4 415.3 L498.0 421.0 L503.7 430.0 L512.7 437.3 L524.0 446.2 L529.0 456.0 L527.3 465.8 L531.4 472.3 L533.8 482.1 L534.7 491.8 L538.7 495.1"/><path d="M245.5 603.2 L238.6 599.8 L237.2 591.5 L235.8 587.3 L240.0 585.3 L252.4 581.8 L260.7 581.1 L265.6 573.5 L273.2 564.5 L277.4 561.7 L273.2 556.9 L272.5 548.6 L273.2 541.7 L281.5 532.0 L285.7 523.7 L284.3 516.7 L287.0 511.9 L294.0 505.0 L299.5 504.3 L299.5 499.4 L305.0 493.9 L310.6 491.1 L316.1 487.0 L317.5 480.8 L321.6 474.5 L328.6 472.4 L336.9 470.4 L343.8 469.7 L346.6 466.9 L353.5 464.8 L362.5 464.8 L363.2 457.2 L366.6 454.5 L374.2 457.9 L383.9 458.6 L397.8 461.4 L403.3 466.2 L411.6 471.1 L417.8 476.6 L422.7 478.0 L429.6 475.9 L429.6 468.3 L435.1 467.6 L439.4 469.0 L449.1 462.5 L455.7 466.6 L462.2 465.8 L480.1 474.7 L486.6 479.6 L493.9 473.1 L507.8 480.4 L517.5 483.7 L529.0 492.7 L538.7 495.1"/><path d="M538.7 495.1 L545.2 487.0 L550.1 484.5 L559.1 482.1 L561.5 477.2 L566.4 474.7 L572.9 478.0 L583.5 474.7 L581.9 466.6 L588.4 460.1 L594.1 451.9 L596.5 444.6 L607.9 428.3 L609.6 416.9 L609.6 410.4 L617.7 400.6 L619.3 392.5 L631.6 387.6 L640.5 383.5 L647.0 390.0 L648.7 395.7 L660.9 397.4 L668.2 396.6 L675.5 400.6 L684.0 400.0 L705.2 393.4 L715.0 391.8 L729.6 394.2"/><path d="M594.1 452.7 L606.3 452.7 L619.3 466.6 L621.8 470.7 L641.3 469.8 L644.0 470.3 L648.9 476.0 L657.0 470.3 L666.0 470.7 L670.1 473.5 L677.4 473.9 L679.8 476.8 L685.5 476.4 L690.4 476.0 L697.7 482.1 L701.8 481.7 L705.9 476.8 L709.1 474.3 L714.0 472.7 L716.5 469.5"/><path d="M538.7 495.1 L538.7 503.2 L540.3 508.5 L540.3 516.7 L543.5 521.5 L548.4 519.1 L558.2 524.8 L558.2 531.3 L566.3 532.1 L576.1 537.0 L590.8 540.3 L594.0 543.5 L608.7 546.8 L625.8 552.5 L634.7 550.9 L644.5 549.2 L649.4 545.2 L665.7 546.0 L677.1 546.8 L686.0 541.9 L703.1 543.5 L719.4 545.2 L727.6 542.7 L734.1 544.3 L740.6 545.2 L753.6 542.7 L771.6 551.7 L784.6 553.3 L803.1 557.4 L808.0 554.9 L817.7 550.9 L827.5 550.9 L842.2 546.0 L850.3 546.0"/><path d="M716.1 469.5 L718.5 476.0 L716.5 479.6 L710.8 479.2 L704.3 485.7 L700.2 488.2 L697.7 492.3 L696.9 497.1 L697.7 501.2 L696.5 505.3 L692.0 509.8 L692.0 520.0 L687.2 520.8 L674.9 519.5 L671.7 521.6 L670.9 525.6 L666.0 526.5 L664.4 532.0 L659.2 539.5 L651.0 545.2"/><path d="M711.7 326.7 L721.5 341.3 L727.2 354.3 L731.2 367.4 L732.0 385.3 L729.6 393.4 L734.5 400.8 L731.2 408.1 L732.0 416.2 L723.1 426.0 L722.2 432.0 L722.6 441.8 L719.7 445.0 L720.1 460.5 L717.3 466.2 L716.1 469.5"/><path d="M716.1 469.5 L722.2 465.8 L726.2 467.8 L734.4 468.2 L737.6 471.5 L745.0 464.6 L749.9 464.2 L753.9 465.4"/><path d="M729.6 394.2 L749.1 400.8 L758.9 399.1 L762.2 403.2 L773.6 409.7 L780.1 406.5 L786.6 411.3 L791.5 420.3"/><path d="M806.0 184.2 L817.4 194.0 L823.9 188.3 L831.2 194.0 L841.0 190.7 L850.8 195.6 L856.5 192.4 L863.8 193.2 L868.7 202.1 L876.8 202.9 L881.7 201.3 L889.9 205.4 L891.5 213.5 L898.0 220.0 L903.7 218.4 L909.4 229.0 L911.0 234.7 L919.2 234.7 L927.3 235.5 L931.4 240.4 L937.1 250.2 L942.8 259.1 L953.4 264.8 L964.8 268.9 L979.4 267.3 L981.9 264.8 L995.7 264.0 L1005.5 259.9 L1008.8 255.1 L1012.8 243.7 L1020.2 234.7 L1036.4 233.9 L1044.6 225.7 L1051.1 216.8 L1056.0 215.2 L1054.4 207.0"/><path d="M964.8 268.9 L976.2 277.9 L987.6 280.3 L994.1 284.4 L1007.1 285.2 L1013.6 290.9 L1026.7 290.9 L1034.0 285.2 L1040.5 290.1 L1047.0 291.7"/><path d="M964.8 268.9 L959.9 279.5 L956.6 295.8 L947.7 315.3 L943.0 319.3 L934.8 330.7 L927.5 344.6 L926.7 351.1 L920.2 362.5 L916.9 372.3 L910.4 383.7 L908.7 391.8 L900.6 403.2 L894.1 413.0 L889.2 421.1 L890.8 429.3 L886.8 441.5"/><path d="M947.7 317.0 L957.5 320.2 L964.0 315.3 L972.1 312.9 L978.6 316.1 L986.0 319.4 L995.7 320.2 L1000.6 324.3 L1008.8 325.1 L1016.9 332.4 L1023.4 330.8 L1025.0 327.5 L1030.7 329.2"/><path d="M916.9 372.3 L921.8 377.1 L925.0 390.2 L929.9 399.9 L931.6 406.5 L937.3 410.5"/><path d="M916.9 372.3 L908.0 365.7 L900.6 369.0 L888.4 377.1 L887.6 382.0 L872.9 396.7 L868.0 403.2 L855.0 416.2 L843.6 421.1 L825.7 422.7 L811.0 419.5 L804.5 417.9 L791.5 420.3"/><path d="M791.5 421.1 L801.3 432.5 L807.8 439.0 L817.5 442.3"/><path d="M790.0 423.0 L800.0 434.5 L803.0 437.0"/><path d="M791.5 421.1 L783.3 427.6 L781.7 434.1 L773.6 447.2 L768.7 448.8 L755.7 461.8 L753.2 465.9"/><path d="M801.3 432.5 L799.6 448.8 L798.0 458.6 L793.1 465.1 L788.2 479.8 L798.0 486.3 L800.4 496.0 L796.6 502.0 L802.3 509.3 L802.3 523.2 L799.8 526.4 L799.8 532.1 L804.7 539.5 L807.2 549.2 L806.3 554.1 L803.1 557.4 L800.6 572.0 L803.1 585.1 L806.3 589.9 L801.5 598.1 L802.3 609.5 L805.5 614.4 L816.1 616.8 L828.3 608.7 L835.7 611.1 L845.4 614.4 L848.7 623.3 L858.5 626.6 L862.5 636.4 L862.5 648.6 L866.6 652.7"/><path d="M753.2 465.9 L763.8 466.7 L780.1 466.7 L789.9 460.2 L798.0 459.4 L811.0 455.3 L811.8 453.7"/><path d="M753.9 465.4 L754.3 480.9 L752.7 492.7 L751.5 503.7 L749.0 505.7 L749.0 518.3 L746.6 521.6 L740.9 528.1 L734.9 541.1 L734.1 544.3 L735.7 555.7 L739.8 570.4 L739.8 599.7 L740.6 620.9 L738.2 629.0 L739.0 643.7 L743.1 647.0"/><path d="M753.2 468.4 L765.4 478.1 L775.2 489.5 L788.2 496.0 L812.7 493.6 L837.1 495.2 L855.0 500.9 L864.8 506.6 L868.2 512.0 L867.4 512.6"/><path d="M850.3 546.0 L842.2 546.0 L843.8 539.5 L849.5 528.1 L859.3 519.9 L867.4 512.6 L867.2 496.0 L874.5 479.8 L886.0 476.5"/><path d="M802.3 523.2 L809.6 523.2 L816.1 528.9 L820.2 532.9 L828.3 537.0 L829.1 542.7 L827.5 550.9 L835.7 557.4 L840.5 565.5 L842.2 576.9 L838.1 586.7 L838.1 601.3 L836.5 607.9 L848.7 606.2 L856.8 614.4 L869.9 620.9 L874.7 627.4 L894.3 628.2 L891.9 637.2 L881.3 638.8 L871.5 647.0 L866.6 652.7"/><path d="M866.6 652.7 L878.0 659.2 L887.8 655.1 L895.9 655.9 L899.2 662.4 L905.7 660.0"/><path d="M878.0 659.2 L881.3 666.5 L884.5 679.5 L889.4 686.7 L893.3 693.7 L887.1 703.0 L878.6 706.9 L878.6 714.6 L870.8 720.8 L859.2 727.0 L856.9 740.9 L856.9 751.7 L853.0 756.4"/><path d="M866.6 652.7 L858.5 659.2 L856.0 668.1 L852.3 669.7 L843.8 677.1 L843.0 677.5 L841.4 684.4 L833.7 686.0 L821.3 696.8 L807.4 699.9 L795.0 704.5 L784.2 699.9 L776.5 693.7"/><path d="M625.8 552.5 L621.7 557.4 L618.5 563.9 L618.5 568.8 L613.6 573.7 L598.9 576.1 L595.7 572.8 L582.6 574.5 L581.0 580.2 L572.9 585.1 L564.7 591.6 L559.8 599.7 L554.9 608.7 L548.4 607.9 L541.9 611.1 L537.0 619.3 L530.5 627.4 L535.4 633.9 L541.9 638.8 L556.6 638.8 L563.1 632.3 L566.3 628.2 L581.0 629.0 L595.7 632.3 L602.2 635.5 L610.3 636.4 L620.1 632.3 L625.8 635.5 L626.6 647.0 L638.0 647.8 L651.0 643.7 L659.2 640.4 L680.4 640.4 L685.2 647.0 L696.6 649.4 L711.3 648.6 L729.2 649.4 L743.1 647.8"/><path d="M541.9 638.8 L550.1 642.0 L566.3 649.4 L571.2 658.4 L578.6 660.8 L584.3 650.2 L594.0 634.7"/><path d="M578.6 660.8 L578.6 673.0 L582.6 684.4 L583.4 692.0 L584.3 706.7 L580.2 714.8 L576.9 731.1 L575.3 744.1"/><path d="M539.5 638.8 L539.5 648.6 L545.2 653.5 L553.3 664.9 L554.9 674.6 L550.9 681.2 L551.7 692.6 L554.9 701.8 L548.4 713.2 L537.0 716.4 L527.3 720.7 L518.2 724.6 L513.6 731.1 L517.5 735.0 L516.9 744.1 L511.7 751.9 L505.1 755.8 L497.3 755.8 L488.2 764.3"/><path d="M743.1 647.0 L743.9 639.6 L753.6 638.0 L758.5 643.7 L769.9 640.4 L783.5 638.0 L790.9 644.5 L797.4 645.3 L804.7 649.4 L811.2 645.3 L827.5 637.2 L843.8 635.5 L862.5 636.4"/><path d="M805.5 614.4 L800.6 620.9 L799.0 632.3 L797.4 644.5"/><path d="M743.1 647.0 L743.9 658.4 L742.2 663.2 L732.5 666.5 L721.1 672.2 L720.3 686.0 L718.6 692.0 L715.4 706.7 L713.7 721.3 L706.4 731.9"/><path d="M790.9 644.5 L781.9 651.8 L777.8 658.4 L778.7 669.8 L772.1 682.8 L775.4 689.3 L778.7 697.4 L788.4 702.0"/><path d="M775.4 689.3 L764.0 697.4 L760.2 700.1 L747.1 705.0 L743.9 713.2 L730.0 717.2 L719.4 711.5 L715.4 706.7"/><path d="M370.9 775.4 L377.5 773.4 L387.9 766.9 L397.0 757.8 L406.1 750.0 L408.7 743.5 L419.1 744.1 L428.3 742.2 L433.5 746.7 L441.3 748.0 L453.0 757.1 L458.2 760.4 L466.1 763.0 L475.2 763.7 L480.4 766.3 L483.6 763.0 L488.2 764.3"/><path d="M488.2 764.3 L496.0 768.2 L498.6 775.4 L499.9 783.2 L497.3 791.0 L494.1 796.2 L492.8 804.1 L497.3 809.3 L499.9 817.1 L498.6 819.0 L506.4 827.5"/><path d="M492.8 804.1 L494.1 796.2 L501.2 795.6 L510.4 798.8 L516.9 802.1 L524.7 798.2 L541.6 800.1 L549.4 804.7 L556.0 800.8 L562.5 797.5 L574.2 801.4 L582.0 807.3 L589.8 814.5 L594.0 823.6 L598.9 825.5 L606.2 827.2"/><path d="M511.7 751.9 L522.1 751.9 L531.2 748.0 L536.4 750.6 L549.4 748.0 L559.9 741.5 L575.5 742.2"/><path d="M575.3 743.3 L585.9 743.3 L594.0 736.8 L608.7 736.0 L618.5 731.1 L626.6 720.5 L646.1 714.8 L659.2 718.1 L660.0 726.2 L672.2 726.2 L693.4 721.3 L706.4 711.5 L714.5 710.7"/><path d="M706.4 731.9 L690.1 735.2 L686.0 748.2 L665.7 756.3 L655.9 766.9 L647.0 776.7 L642.9 788.1 L621.7 796.2 L621.7 814.1 L614.4 824.7 L606.2 827.2"/><path d="M706.4 731.9 L713.7 757.1 L713.7 773.4 L698.3 785.6 L704.8 793.0 L709.7 806.0 L717.8 822.3"/><path d="M575.3 744.1 L572.0 753.1 L576.1 763.7 L575.3 770.2 L592.4 775.1 L595.7 783.2 L601.4 794.6 L604.6 807.6 L609.5 815.8 L606.2 827.2"/><path d="M606.2 827.2 L595.5 837.8 L586.5 842.3 L569.8 842.9 L569.1 846.8"/><path d="M606.2 827.2 L607.1 840.3 L611.6 846.8 L616.1 851.9 L623.8 856.4 L634.1 855.1 L636.7 858.4 L641.9 859.6 L648.3 866.1 L650.9 867.4 L661.2 864.8 L665.0 862.2 L674.0 861.6 L681.8 854.5 L690.8 853.2 L698.5 843.5 L704.9 842.3 L712.7 832.6 L717.2 823.6"/><path d="M648.3 866.1 L642.5 872.5 L643.1 882.8 L645.7 891.8"/><path d="M647.6 898.9 L644.4 909.8 L641.9 916.3 L634.1 920.2 L629.0 924.7 L629.0 930.5 L631.5 939.5"/><path d="M717.2 823.6 L725.5 821.0 L734.6 823.6 L742.3 824.9 L750.0 828.7 L752.6 833.9 L760.3 833.2 L765.4 829.4 L775.8 830.7 L782.7 821.3 L792.0 821.3 L798.1 813.6 L805.9 812.0 L809.0 805.9 L815.2 801.2 L815.9 792.7 L824.4 787.3 L830.6 788.1 L839.9 781.1 L843.0 771.8 L850.7 767.2 L850.7 759.4 L853.0 756.4"/><path d="M717.2 823.6 L726.8 826.2 L730.0 832.6 L730.7 839.0 L737.1 839.0"/><path d="M776.5 693.7 L787.3 710.0 L801.2 713.8 L809.0 721.6 L816.7 736.2 L822.9 742.4 L836.8 748.6 L853.0 756.4"/><path d="M905.6 776.5 L897.1 777.2 L889.4 781.9 L884.8 790.4 L878.6 802.8 L876.3 815.1 L873.2 822.9 L873.2 830.6 L876.3 838.3"/></g></svg>
</body></html>
